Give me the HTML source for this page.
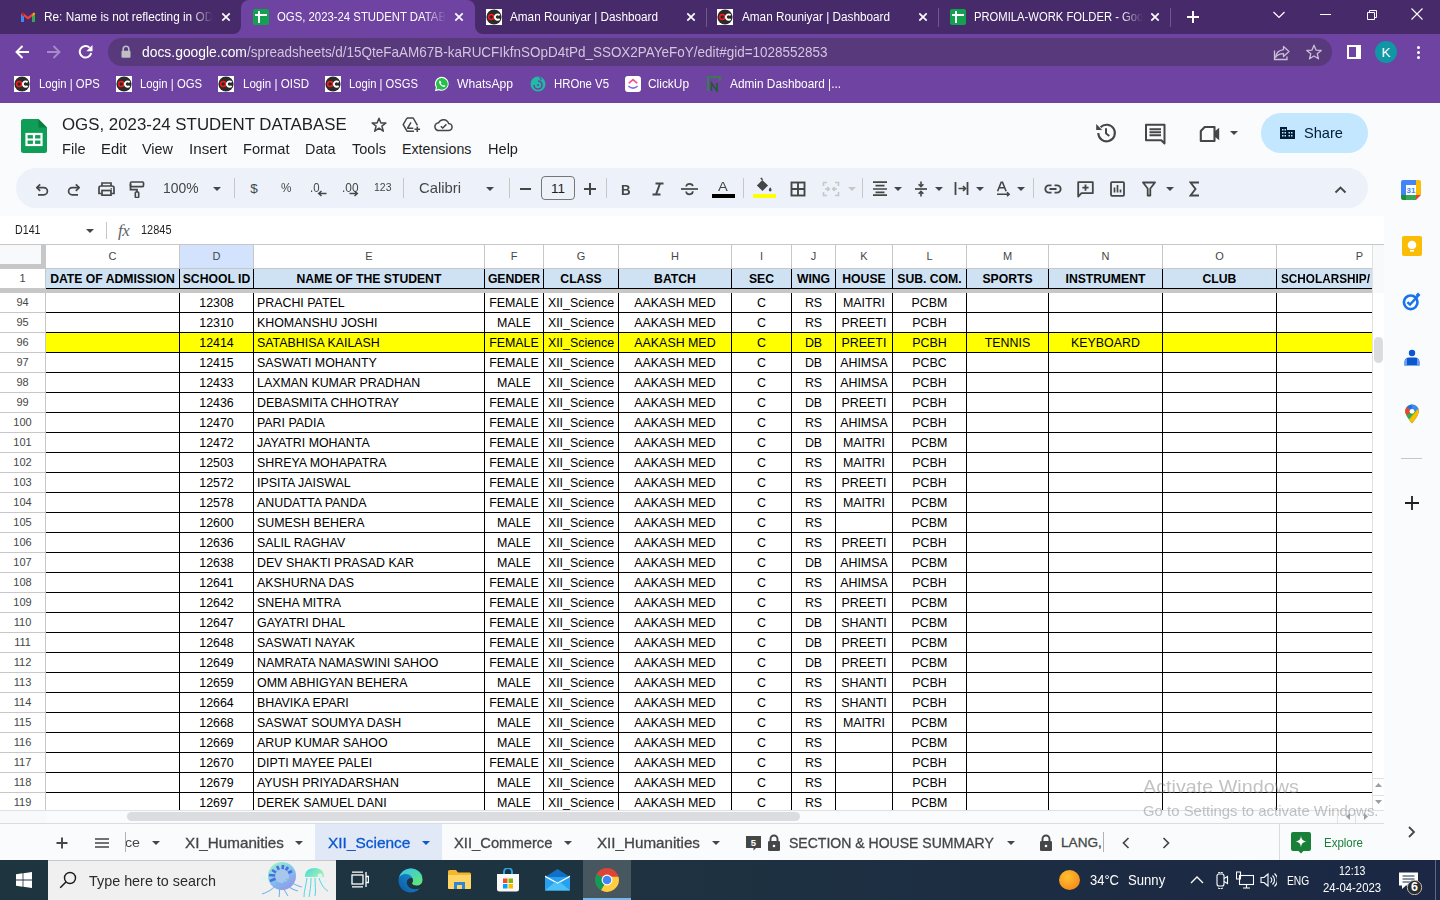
<!DOCTYPE html>
<html><head><meta charset="utf-8"><style>
*{margin:0;padding:0;box-sizing:border-box}
html,body{width:1440px;height:900px;overflow:hidden}
body{position:relative;font-family:"Liberation Sans",sans-serif;background:#f9fbfd}
.a{position:absolute}
.t{position:absolute;white-space:pre}
</style></head><body>
<div class="a" style="left:0px;top:0px;width:1440px;height:34px;background:#472a6a"></div>
<div class="a" style="left:0px;top:34px;width:1440px;height:69px;background:#6f43a1"></div>
<div class="a" style="left:241px;top:0px;width:234px;height:34px;background:#6f43a1;border-radius:8px 8px 0 0"></div>
<div class="a" style="left:233px;top:26px;width:8px;height:8px;background:#6f43a1"><div style="width:8px;height:8px;background:#472a6a;border-bottom-right-radius:8px"></div></div>
<div class="a" style="left:475px;top:26px;width:8px;height:8px;background:#6f43a1"><div style="width:8px;height:8px;background:#472a6a;border-bottom-left-radius:8px"></div></div>
<svg class="a" style="left:21px;top:12px;" width="14" height="10" viewBox="0 0 14 10"><path d="M0 2V10H3V4.5L7 7.5L11 4.5V10H14V2L12.5 0.6L7 4.8L1.5 0.6Z" fill="#ea4335"/><path d="M0 2V10H3V4.5Z" fill="#4285f4"/><path d="M11 4.5V10H14V2Z" fill="#34a853"/><path d="M11 4.5L14 2V1.2L12.5 0.6Z" fill="#fbbc04"/><path d="M0 2L3 4.5V1.5L1.5 0.6Z" fill="#c5221f"/></svg>
<div class="a" style="left:44px;top:7.59px;width:169px;height:18.3px;overflow:hidden;-webkit-mask-image:linear-gradient(90deg,#000 147px,transparent 169px)"><div class="t" style="left:0;top:3px;font-size:12.3px;line-height:12.3px;color:#fff;transform:scaleX(0.9593);transform-origin:0 0;">Re: Name is not reflecting in ODOO</div></div>
<svg class="a" style="left:218px;top:9px;" width="16" height="16" viewBox="0 0 16 16"><path d="M4.3 4.3L11.7 11.7M11.7 4.3L4.3 11.7" stroke="#fff" stroke-width="1.7" stroke-linecap="butt"/></svg>
<svg class="a" style="left:253px;top:9px;" width="16" height="16" viewBox="0 0 16 16"><rect width="16" height="16" rx="2" fill="#14a051"/><rect x="2" y="5" width="12" height="2" fill="#fff"/><rect x="5" y="2" width="2" height="12" fill="#fff"/></svg>
<div class="a" style="left:277px;top:7.59px;width:169px;height:18.3px;overflow:hidden;-webkit-mask-image:linear-gradient(90deg,#000 147px,transparent 169px)"><div class="t" style="left:0;top:3px;font-size:12.3px;line-height:12.3px;color:#fff;transform:scaleX(0.9228);transform-origin:0 0;">OGS, 2023-24 STUDENT DATABASE</div></div>
<svg class="a" style="left:451px;top:9px;" width="16" height="16" viewBox="0 0 16 16"><path d="M4.3 4.3L11.7 11.7M11.7 4.3L4.3 11.7" stroke="#fff" stroke-width="1.7" stroke-linecap="butt"/></svg>
<svg class="a" style="left:486px;top:9px;" width="16" height="16" viewBox="0 0 16 16"><rect width="16" height="16" fill="#fff"/><circle cx="8" cy="8" r="7.6" fill="#2b2b2b"/><circle cx="5.2" cy="8" r="2.5" fill="none" stroke="#ff1a1a" stroke-width="1.4"/><path d="M13.6 6.3A2.7 2.7 0 1 0 13.6 9.9" fill="none" stroke="#fff" stroke-width="1.9"/></svg>
<div class="t" style="left:510.00px;top:10.59px;font-size:12.3px;line-height:12.3px;color:#fff;transform:scaleX(0.9550);transform-origin:0 0;">Aman Rouniyar | Dashboard</div>
<svg class="a" style="left:683px;top:9px;" width="16" height="16" viewBox="0 0 16 16"><path d="M4.3 4.3L11.7 11.7M11.7 4.3L4.3 11.7" stroke="#fff" stroke-width="1.7" stroke-linecap="butt"/></svg>
<div class="a" style="left:706px;top:8px;width:1px;height:19px;background:#6e5a8a"></div>
<svg class="a" style="left:717px;top:9px;" width="16" height="16" viewBox="0 0 16 16"><rect width="16" height="16" fill="#fff"/><circle cx="8" cy="8" r="7.6" fill="#2b2b2b"/><circle cx="5.2" cy="8" r="2.5" fill="none" stroke="#ff1a1a" stroke-width="1.4"/><path d="M13.6 6.3A2.7 2.7 0 1 0 13.6 9.9" fill="none" stroke="#fff" stroke-width="1.9"/></svg>
<div class="t" style="left:742.00px;top:10.59px;font-size:12.3px;line-height:12.3px;color:#fff;transform:scaleX(0.9550);transform-origin:0 0;">Aman Rouniyar | Dashboard</div>
<svg class="a" style="left:915px;top:9px;" width="16" height="16" viewBox="0 0 16 16"><path d="M4.3 4.3L11.7 11.7M11.7 4.3L4.3 11.7" stroke="#fff" stroke-width="1.7" stroke-linecap="butt"/></svg>
<div class="a" style="left:938px;top:8px;width:1px;height:19px;background:#6e5a8a"></div>
<svg class="a" style="left:950px;top:9px;" width="16" height="16" viewBox="0 0 16 16"><rect width="16" height="16" rx="2" fill="#14a051"/><rect x="2" y="5" width="12" height="2" fill="#fff"/><rect x="5" y="2" width="2" height="12" fill="#fff"/></svg>
<div class="a" style="left:974px;top:7.59px;width:169px;height:18.3px;overflow:hidden;-webkit-mask-image:linear-gradient(90deg,#000 147px,transparent 169px)"><div class="t" style="left:0;top:3px;font-size:12.3px;line-height:12.3px;color:#fff;transform:scaleX(0.9146);transform-origin:0 0;">PROMILA-WORK FOLDER - Google Drive</div></div>
<svg class="a" style="left:1147px;top:9px;" width="16" height="16" viewBox="0 0 16 16"><path d="M4.3 4.3L11.7 11.7M11.7 4.3L4.3 11.7" stroke="#fff" stroke-width="1.7" stroke-linecap="butt"/></svg>
<div class="a" style="left:1170px;top:8px;width:1px;height:19px;background:#6e5a8a"></div>
<svg class="a" style="left:1185px;top:9px;" width="16" height="16" viewBox="0 0 16 16"><path d="M8 2V14M2 8H14" stroke="#fff" stroke-width="2"/></svg>
<svg class="a" style="left:1272px;top:9px;" width="14" height="10" viewBox="0 0 14 10"><path d="M1.5 3L7 8.5L12.5 3" fill="none" stroke="#fff" stroke-width="1.2"/></svg>
<div class="a" style="left:1320px;top:14px;width:11px;height:1px;background:#fff"></div>
<svg class="a" style="left:1364px;top:8px;" width="14" height="14" viewBox="0 0 14 14"><path d="M3.5 4.5H10.5V11.5H3.5Z M5.5 4.5V2.5H12.5V9.5H10.5" fill="none" stroke="#fff" stroke-width="1"/></svg>
<svg class="a" style="left:1410px;top:7px;" width="14" height="14" viewBox="0 0 14 14"><path d="M1.5 1.5L12.5 12.5M12.5 1.5L1.5 12.5" stroke="#fff" stroke-width="1.1"/></svg>
<svg class="a" style="left:14px;top:44px;" width="16" height="16" viewBox="0 0 16 16"><path d="M15 8H2.5M8.5 2L2.5 8L8.5 14" fill="none" stroke="#fff" stroke-width="1.9"/></svg>
<svg class="a" style="left:46px;top:44px;" width="16" height="16" viewBox="0 0 16 16"><path d="M1 8H13.5M7.5 2L13.5 8L7.5 14" fill="none" stroke="#a78ac9" stroke-width="1.9"/></svg>
<svg class="a" style="left:78px;top:44px;" width="16" height="16" viewBox="0 0 16 16"><path d="M13.2 9A5.8 5.8 0 1 1 11.6 3.6" fill="none" stroke="#fff" stroke-width="2"/><path d="M14.5 1V7.2H8.3Z" fill="#fff"/></svg>
<div class="a" style="left:108px;top:38px;width:1224px;height:28px;background:#57397c;border-radius:14px"></div>
<svg class="a" style="left:121px;top:45px;" width="10" height="13" viewBox="0 0 10 13"><path d="M2.2 6V4A2.8 2.8 0 0 1 7.8 4V6" fill="none" stroke="#bdbfc3" stroke-width="1.6"/><rect x="0.5" y="5.8" width="9" height="7" rx="1" fill="#bdbfc3"/></svg>
<div class="t" style="left:142.00px;top:44.98px;font-size:14.2px;line-height:14.2px;color:#fff;transform:scaleX(0.9781);transform-origin:0 0;">docs.google.com</div>
<div class="t" style="left:247.00px;top:44.98px;font-size:14.2px;line-height:14.2px;color:#d2c6e0;transform:scaleX(0.9495);transform-origin:0 0;">/spreadsheets/d/15QteFaAM67B-kaRUCFIkfnSOpD4tPd_SSOX2PAYeFoY/edit#gid=1028552853</div>
<svg class="a" style="left:1273px;top:44px;" width="18" height="17" viewBox="0 0 18 17"><path d="M10.5 2.5L16 7.5L10.5 12.5V9.6C6.5 9.6 4.2 10.8 2.5 13.5C3 9 5.5 6.2 10.5 5.6Z" fill="none" stroke="#c9bfd6" stroke-width="1.3" stroke-linejoin="round"/><path d="M1.5 6.5V15.5H14V12.5" fill="none" stroke="#c9bfd6" stroke-width="1.3"/></svg>
<svg class="a" style="left:1306px;top:44px;" width="16" height="16" viewBox="0 0 16 16"><path d="M8 1.2L10 6.1L15.2 6.4L11.2 9.7L12.5 14.8L8 12L3.5 14.8L4.8 9.7L0.8 6.4L6 6.1Z" fill="none" stroke="#c9bfd6" stroke-width="1.3" stroke-linejoin="round"/></svg>
<svg class="a" style="left:1347px;top:45px;" width="14" height="14" viewBox="0 0 14 14"><rect x="1" y="1" width="12" height="12" fill="none" stroke="#fff" stroke-width="2"/><rect x="9" y="0" width="5" height="14" fill="#fff"/></svg>
<div class="a" style="left:1375px;top:41px;width:22px;height:22px;border-radius:50%;background:#1096a4"></div>
<div class="t" style="left:1381.50px;top:45.57px;font-size:13.5px;line-height:13.5px;color:#fff;">K</div>
<div class="a" style="left:1416.5px;top:45.5px;width:3px;height:3px;border-radius:50%;background:#fff"></div>
<div class="a" style="left:1416.5px;top:50.5px;width:3px;height:3px;border-radius:50%;background:#fff"></div>
<div class="a" style="left:1416.5px;top:55.5px;width:3px;height:3px;border-radius:50%;background:#fff"></div>
<svg class="a" style="left:14px;top:76px;" width="16" height="16" viewBox="0 0 16 16"><rect width="16" height="16" fill="#fff"/><circle cx="8" cy="8" r="7.6" fill="#2b2b2b"/><circle cx="5.2" cy="8" r="2.5" fill="none" stroke="#ff1a1a" stroke-width="1.4"/><path d="M13.6 6.3A2.7 2.7 0 1 0 13.6 9.9" fill="none" stroke="#fff" stroke-width="1.9"/></svg>
<div class="t" style="left:38.60px;top:77.84px;font-size:12px;line-height:12px;color:#fff;transform:scaleX(0.9412);transform-origin:0 0;">Login | OPS</div>
<svg class="a" style="left:116px;top:76px;" width="16" height="16" viewBox="0 0 16 16"><rect width="16" height="16" fill="#fff"/><circle cx="8" cy="8" r="7.6" fill="#2b2b2b"/><circle cx="5.2" cy="8" r="2.5" fill="none" stroke="#ff1a1a" stroke-width="1.4"/><path d="M13.6 6.3A2.7 2.7 0 1 0 13.6 9.9" fill="none" stroke="#fff" stroke-width="1.9"/></svg>
<div class="t" style="left:140.00px;top:77.84px;font-size:12px;line-height:12px;color:#fff;transform:scaleX(0.9420);transform-origin:0 0;">Login | OGS</div>
<svg class="a" style="left:218px;top:76px;" width="16" height="16" viewBox="0 0 16 16"><rect width="16" height="16" fill="#fff"/><circle cx="8" cy="8" r="7.6" fill="#2b2b2b"/><circle cx="5.2" cy="8" r="2.5" fill="none" stroke="#ff1a1a" stroke-width="1.4"/><path d="M13.6 6.3A2.7 2.7 0 1 0 13.6 9.9" fill="none" stroke="#fff" stroke-width="1.9"/></svg>
<div class="t" style="left:243.00px;top:77.84px;font-size:12px;line-height:12px;color:#fff;transform:scaleX(0.9637);transform-origin:0 0;">Login | OISD</div>
<svg class="a" style="left:325px;top:76px;" width="16" height="16" viewBox="0 0 16 16"><rect width="16" height="16" fill="#fff"/><circle cx="8" cy="8" r="7.6" fill="#2b2b2b"/><circle cx="5.2" cy="8" r="2.5" fill="none" stroke="#ff1a1a" stroke-width="1.4"/><path d="M13.6 6.3A2.7 2.7 0 1 0 13.6 9.9" fill="none" stroke="#fff" stroke-width="1.9"/></svg>
<div class="t" style="left:349.00px;top:77.84px;font-size:12px;line-height:12px;color:#fff;transform:scaleX(0.9347);transform-origin:0 0;">Login | OSGS</div>
<svg class="a" style="left:434px;top:76px;" width="16" height="16" viewBox="0 0 16 16"><path d="M8 0.8A7 7 0 0 0 1.9 11.4L0.9 15.2L4.8 14.2A7 7 0 1 0 8 0.8Z" fill="#fff"/><path d="M8 2A5.9 5.9 0 0 0 3 11.1L2.4 13.6L4.9 13A5.9 5.9 0 1 0 8 2Z" fill="#25c04a"/><path d="M5.6 4.6C5.2 5 4.7 5.8 5.3 7.2C6 8.8 7.4 10.3 9.2 10.9C10.4 11.3 11 10.8 11.3 10.2L11.1 9.5L9.7 8.9L9 9.6C8.3 9.3 7.2 8.3 6.8 7.4L7.4 6.7L6.8 5.2Z" fill="#fff"/></svg>
<div class="t" style="left:457.00px;top:77.84px;font-size:12px;line-height:12px;color:#fff;transform:scaleX(1.0116);transform-origin:0 0;">WhatsApp</div>
<svg class="a" style="left:530px;top:76px;" width="16" height="16" viewBox="0 0 16 16"><circle cx="8" cy="8" r="7.5" fill="#1fbba6"/><path d="M4 9A4 4 0 0 0 12 9A4 4 0 0 0 8 5" fill="none" stroke="#6f43a1" stroke-width="1.6"/><circle cx="8" cy="9" r="1" fill="#6f43a1"/><path d="M9.5 1L11.5 4" stroke="#6f43a1" stroke-width="1.2"/></svg>
<div class="t" style="left:554.00px;top:77.84px;font-size:12px;line-height:12px;color:#fff;transform:scaleX(0.9478);transform-origin:0 0;">HROne V5</div>
<svg class="a" style="left:625px;top:76px;" width="16" height="16" viewBox="0 0 16 16"><rect width="16" height="16" rx="3" fill="#fff"/><path d="M4.2 6.8L8 3.6L11.8 6.8" fill="none" stroke="#ff4f8b" stroke-width="1.7" stroke-linecap="round"/><path d="M4 10.5C6.2 12.6 9.8 12.6 12 10.5" fill="none" stroke="#7b68ee" stroke-width="1.7" stroke-linecap="round"/></svg>
<div class="t" style="left:648.00px;top:77.84px;font-size:12px;line-height:12px;color:#fff;transform:scaleX(0.9918);transform-origin:0 0;">ClickUp</div>
<svg class="a" style="left:707px;top:76px;" width="14" height="16" viewBox="0 0 14 16"><path d="M1 15V1H13V5" fill="none" stroke="#2e8b3e" stroke-width="1.6"/><path d="M4.5 15V7L10 15V7" fill="none" stroke="#1e5e2a" stroke-width="1.6"/></svg>
<div class="t" style="left:730.00px;top:77.84px;font-size:12px;line-height:12px;color:#fff;transform:scaleX(0.9866);transform-origin:0 0;">Admin Dashboard |...</div>
<div class="a" style="left:0px;top:103px;width:1440px;height:757px;background:#f9fbfd"></div>
<div class="a" style="left:16px;top:168px;width:1352px;height:40px;background:#edf2fa;border-radius:20px"></div>
<div class="a" style="left:0px;top:216px;width:1384px;height:28px;background:#fff"></div>
<svg class="a" style="left:21px;top:119px;" width="26" height="34" viewBox="0 0 26 34"><path d="M0 2.5A2.5 2.5 0 0 1 2.5 0H17.5L26 8.5V31.5A2.5 2.5 0 0 1 23.5 34H2.5A2.5 2.5 0 0 1 0 31.5Z" fill="#0f9d58"/><path d="M17.5 0V8.5H26Z" fill="#087f3f"/><rect x="5.5" y="15" width="15" height="11" fill="none" stroke="#fff" stroke-width="2.2"/><path d="M5.5 20.5H20.5M13 15V26" stroke="#fff" stroke-width="2.2"/></svg>
<div class="t" style="left:61.50px;top:115.94px;font-size:17.2px;line-height:17.2px;color:#1f1f1f;transform:scaleX(0.9807);transform-origin:0 0;">OGS, 2023-24 STUDENT DATABASE</div>
<svg class="a" style="left:371px;top:117px;" width="16" height="16" viewBox="0 0 16 16"><path d="M8 1.3L9.9 6H14.9L10.9 9.1L12.3 14.2L8 11.2L3.7 14.2L5.1 9.1L1.1 6H6.1Z" fill="none" stroke="#444746" stroke-width="1.5" stroke-linejoin="round"/></svg>
<svg class="a" style="left:402px;top:117px;" width="19" height="16" viewBox="0 0 19 16"><path d="M5 1H11.2L15.4 8.3M12 14.2H5L1.2 7.6L5 1" fill="none" stroke="#444746" stroke-width="1.5" stroke-linejoin="round"/><path d="M9 5.4L5.6 11.2H11.3" fill="none" stroke="#444746" stroke-width="1.5" stroke-linejoin="round"/><path d="M15.3 9.4V15M12.5 12.2H18.1" stroke="#444746" stroke-width="1.6"/></svg>
<svg class="a" style="left:434px;top:118px;" width="19" height="14" viewBox="0 0 19 14"><path d="M5 12.6H14.3A3.6 3.6 0 0 0 14.6 5.4A5.4 5.4 0 0 0 4.6 4.8A3.9 3.9 0 0 0 5 12.6Z" fill="none" stroke="#444746" stroke-width="1.5"/><path d="M6.8 8.2L8.7 10L12.4 6.4" fill="none" stroke="#444746" stroke-width="1.5"/></svg>
<div class="t" style="left:62.30px;top:141.78px;font-size:14.2px;line-height:14.2px;color:#1f1f1f;transform:scaleX(1.0314);transform-origin:0 0;">File</div>
<div class="t" style="left:101.00px;top:141.78px;font-size:14.2px;line-height:14.2px;color:#1f1f1f;transform:scaleX(1.0462);transform-origin:0 0;">Edit</div>
<div class="t" style="left:141.50px;top:141.78px;font-size:14.2px;line-height:14.2px;color:#1f1f1f;transform:scaleX(1.0156);transform-origin:0 0;">View</div>
<div class="t" style="left:188.50px;top:141.78px;font-size:14.2px;line-height:14.2px;color:#1f1f1f;transform:scaleX(1.0700);transform-origin:0 0;">Insert</div>
<div class="t" style="left:242.50px;top:141.78px;font-size:14.2px;line-height:14.2px;color:#1f1f1f;transform:scaleX(1.0340);transform-origin:0 0;">Format</div>
<div class="t" style="left:304.50px;top:141.78px;font-size:14.2px;line-height:14.2px;color:#1f1f1f;transform:scaleX(1.0168);transform-origin:0 0;">Data</div>
<div class="t" style="left:351.50px;top:141.78px;font-size:14.2px;line-height:14.2px;color:#1f1f1f;transform:scaleX(1.0256);transform-origin:0 0;">Tools</div>
<div class="t" style="left:402.00px;top:141.78px;font-size:14.2px;line-height:14.2px;color:#1f1f1f;">Extensions</div>
<div class="t" style="left:487.50px;top:141.78px;font-size:14.2px;line-height:14.2px;color:#1f1f1f;transform:scaleX(1.0272);transform-origin:0 0;">Help</div>
<svg class="a" style="left:1094px;top:121px;" width="24" height="24" viewBox="0 0 24 24"><path d="M4.3 12A8.3 8.3 0 1 0 6.6 6.3" fill="none" stroke="#444746" stroke-width="2.1"/><path d="M2.2 2.9V8.9H8.2Z" fill="#444746"/><path d="M12 7.3V12.4L15.3 15.1" fill="none" stroke="#444746" stroke-width="2"/></svg>
<svg class="a" style="left:1144px;top:123px;" width="22" height="22" viewBox="0 0 22 22"><path d="M2 1.8H20.5V16.8V20.5L17.3 17.3H2Z" fill="none" stroke="#444746" stroke-width="2" stroke-linejoin="round"/><path d="M5.5 6.3H17M5.5 9.3H17M5.5 12.3H17" stroke="#444746" stroke-width="1.9"/></svg>
<svg class="a" style="left:1198px;top:124px;" width="24" height="20" viewBox="0 0 24 20"><path d="M2.8 7L6.7 3H16.5V17H2.8Z" fill="none" stroke="#444746" stroke-width="2.1" stroke-linejoin="round"/><path d="M16.5 7.6L21.2 3.8V16.2L16.5 12.4Z" fill="#444746"/></svg>
<svg class="a" style="left:1229px;top:130px;" width="10" height="6" viewBox="0 0 10 6"><path d="M1 1H9L5 5Z" fill="#444746"/></svg>
<div class="a" style="left:1261px;top:113px;width:107px;height:40px;background:#c2e7ff;border-radius:20px"></div>
<svg class="a" style="left:1279px;top:126px;" width="17" height="14" viewBox="0 0 17 14"><path d="M1 13V1H8V4H16V13Z" fill="#001d35"/><path d="M3 3H4.5V4.5H3ZM5.5 3H7V4.5H5.5ZM3 6H4.5V7.5H3ZM5.5 6H7V7.5H5.5ZM3 9H4.5V10.5H3ZM5.5 9H7V10.5H5.5ZM9.5 6H11V7.5H9.5ZM12 6H13.5V7.5H12ZM9.5 9H11V10.5H9.5ZM12 9H13.5V10.5H12Z" fill="#c2e7ff"/></svg>
<div class="t" style="left:1303.50px;top:125.97px;font-size:14.8px;line-height:14.8px;color:#001d35;transform:scaleX(0.9875);transform-origin:0 0;">Share</div>
<div class="a" style="left:1388px;top:117px;width:32px;height:32px;border-radius:50%;background:#0c8f9f"></div>
<div class="t" style="left:1398.33px;top:125.61px;font-size:17px;line-height:17px;color:#fff;">K</div>
<svg class="a" style="left:35px;top:183px;" width="14" height="13" viewBox="0 0 14 13"><path d="M5.2 1.3L1.8 4.6L5.2 7.9" fill="none" stroke="#444746" stroke-width="1.7" stroke-linejoin="round"/><path d="M2.3 4.6H8.8A3.6 3.6 0 0 1 8.8 11.8H3" fill="none" stroke="#444746" stroke-width="1.7"/></svg>
<svg class="a" style="left:67px;top:183px;" width="14" height="13" viewBox="0 0 14 13"><path d="M8.8 1.3L12.2 4.6L8.8 7.9" fill="none" stroke="#444746" stroke-width="1.7" stroke-linejoin="round"/><path d="M11.7 4.6H5.2A3.6 3.6 0 0 0 5.2 11.8H11" fill="none" stroke="#444746" stroke-width="1.7"/></svg>
<svg class="a" style="left:98px;top:182px;" width="17" height="14" viewBox="0 0 17 14"><path d="M4 4V1H13V4" fill="none" stroke="#444746" stroke-width="1.7"/><path d="M3.8 11.5H1V6A2 2 0 0 1 3 4H14A2 2 0 0 1 16 6V11.5H13.2" fill="none" stroke="#444746" stroke-width="1.7"/><rect x="4" y="8.5" width="9" height="4.7" fill="none" stroke="#444746" stroke-width="1.7"/><circle cx="13.3" cy="6.7" r="0.8" fill="#444746"/></svg>
<svg class="a" style="left:129px;top:181px;" width="16" height="17" viewBox="0 0 16 17"><rect x="1.5" y="1" width="13" height="4.6" rx="1" fill="none" stroke="#444746" stroke-width="1.7"/><path d="M1.5 3.3V8.7H8V11" fill="none" stroke="#444746" stroke-width="1.7"/><rect x="6.3" y="11" width="3.4" height="5.5" rx="0.8" fill="none" stroke="#444746" stroke-width="1.6"/></svg>
<div class="t" style="left:163.40px;top:182.32px;font-size:13.8px;line-height:13.8px;color:#444746;transform:scaleX(1.0058);transform-origin:0 0;">100%</div>
<svg class="a" style="left:213px;top:187px;" width="8" height="4" viewBox="0 0 8 4"><path d="M0 0H8L4 4Z" fill="#444746"/></svg>
<div class="a" style="left:234px;top:178px;width:1px;height:20px;background:#c7c7c7"></div>
<div class="t" style="left:250.25px;top:181.57px;font-size:13.5px;line-height:13.5px;color:#444746;">$</div>
<div class="t" style="left:280.80px;top:181.72px;font-size:12.5px;line-height:12.5px;color:#444746;transform:scaleX(0.9357);transform-origin:0 0;">%</div>
<div class="t" style="left:309.50px;top:181.72px;font-size:12.5px;line-height:12.5px;color:#444746;transform:scaleX(0.9113);transform-origin:0 0;">.0</div>
<svg class="a" style="left:317px;top:190px;" width="10" height="7" viewBox="0 0 10 7"><path d="M9.5 3.5H2M4.5 1L1.7 3.5L4.5 6" fill="none" stroke="#444746" stroke-width="1.5"/></svg>
<div class="t" style="left:341.50px;top:181.72px;font-size:12.5px;line-height:12.5px;color:#444746;transform:scaleX(0.9495);transform-origin:0 0;">.00</div>
<svg class="a" style="left:349px;top:190px;" width="10" height="7" viewBox="0 0 10 7"><path d="M0.5 3.5H8M5.5 1L8.3 3.5L5.5 6" fill="none" stroke="#444746" stroke-width="1.5"/></svg>
<div class="t" style="left:374.30px;top:182.01px;font-size:11.8px;line-height:11.8px;color:#444746;transform:scaleX(0.8888);transform-origin:0 0;">123</div>
<div class="a" style="left:403px;top:178px;width:1px;height:20px;background:#c7c7c7"></div>
<div class="t" style="left:419.00px;top:181.23px;font-size:14.5px;line-height:14.5px;color:#444746;transform:scaleX(1.0220);transform-origin:0 0;">Calibri</div>
<svg class="a" style="left:486px;top:187px;" width="8" height="4" viewBox="0 0 8 4"><path d="M0 0H8L4 4Z" fill="#444746"/></svg>
<div class="a" style="left:509px;top:178px;width:1px;height:20px;background:#c7c7c7"></div>
<div class="a" style="left:520px;top:188px;width:11px;height:2px;background:#444746"></div>
<div class="a" style="left:541px;top:176px;width:34px;height:24px;border:1px solid #747775;border-radius:4px"></div>
<div class="t" style="left:550.99px;top:182.07px;font-size:13.5px;line-height:13.5px;color:#1f1f1f;">11</div>
<svg class="a" style="left:583px;top:182px;" width="14" height="14" viewBox="0 0 14 14"><path d="M7 1V13M1 7H13" stroke="#444746" stroke-width="2"/></svg>
<div class="a" style="left:606px;top:178px;width:1px;height:20px;background:#c7c7c7"></div>
<div class="t" style="left:621.00px;top:181.60px;font-size:15px;line-height:15px;color:#444746;font-weight:bold;transform:scaleX(0.8862);transform-origin:0 0;">B</div>
<svg class="a" style="left:651px;top:182px;" width="14" height="14" viewBox="0 0 14 14"><path d="M4.5 1.5H12.5M1.5 12.5H9.5M9 1.5L5 12.5" fill="none" stroke="#444746" stroke-width="2"/></svg>
<svg class="a" style="left:680px;top:182px;" width="19" height="14" viewBox="0 0 19 14"><path d="M1 7H18" stroke="#444746" stroke-width="1.7"/><path d="M6.2 4.6C6.2 2.6 8 1.8 9.5 1.8C11 1.8 12.6 2.6 12.8 4.2M12.8 9.3C12.8 11.5 11 12.3 9.5 12.3C7.8 12.3 6.2 11.5 6.2 9.5" fill="none" stroke="#444746" stroke-width="1.7"/></svg>
<div class="t" style="left:718.00px;top:180.79px;font-size:12.3px;line-height:12.3px;color:#444746;transform:scaleX(1.1945);transform-origin:0 0;">A</div>
<div class="a" style="left:712px;top:194px;width:23px;height:4px;background:#000"></div>
<div class="a" style="left:743px;top:178px;width:1px;height:20px;background:#c7c7c7"></div>
<svg class="a" style="left:754px;top:177px;" width="19" height="15" viewBox="0 0 19 15"><path d="M6.8 1L8.6 2.8" stroke="#444746" stroke-width="1.6"/><path d="M8.3 2.9L14 8.6L8.5 14.1L2.9 8.5Z" fill="#444746"/><path d="M3.2 8.5H13.6" stroke="#444746" stroke-width="0.5"/><path d="M16.2 10.2C17 11.4 17.6 12.3 17.6 13A1.4 1.4 0 0 1 14.8 13C14.8 12.3 15.4 11.4 16.2 10.2Z" fill="#444746"/></svg>
<div class="a" style="left:753px;top:194px;width:23px;height:4px;background:#ffff00"></div>
<svg class="a" style="left:790px;top:181px;" width="16" height="16" viewBox="0 0 16 16"><rect x="1.5" y="1.5" width="13" height="13" fill="none" stroke="#444746" stroke-width="1.9"/><path d="M8 1.5V14.5M1.5 8H14.5" stroke="#444746" stroke-width="1.9"/></svg>
<svg class="a" style="left:822px;top:181px;" width="18" height="16" viewBox="0 0 18 16"><path d="M1.5 5V1.5H5M1.5 11V14.5H5M16.5 5V1.5H13M16.5 11V14.5H13" fill="none" stroke="#c4c7c5" stroke-width="1.6"/><path d="M3 8H7M5.3 6L7.3 8L5.3 10M15 8H11M12.7 6L10.7 8L12.7 10" fill="none" stroke="#c4c7c5" stroke-width="1.5"/></svg>
<svg class="a" style="left:848px;top:187px;" width="8" height="4" viewBox="0 0 8 4"><path d="M0 0H8L4 4Z" fill="#c4c7c5"/></svg>
<div class="a" style="left:862px;top:178px;width:1px;height:20px;background:#c7c7c7"></div>
<svg class="a" style="left:872px;top:181px;" width="16" height="15" viewBox="0 0 16 15"><path d="M1 1.2H15M3.5 4.6H12.5M1 8H15M3.5 11.3H12.5M1 14.2H15" stroke="#444746" stroke-width="1.7"/></svg>
<svg class="a" style="left:894px;top:187px;" width="8" height="4" viewBox="0 0 8 4"><path d="M0 0H8L4 4Z" fill="#444746"/></svg>
<svg class="a" style="left:914px;top:181px;" width="14" height="16" viewBox="0 0 14 16"><path d="M1 8H13" stroke="#444746" stroke-width="1.7"/><path d="M7 0.5V5.3M4.6 3.2L7 5.6L9.4 3.2M7 15.5V10.7M4.6 12.8L7 10.4L9.4 12.8" fill="none" stroke="#444746" stroke-width="1.6"/></svg>
<svg class="a" style="left:935px;top:187px;" width="8" height="4" viewBox="0 0 8 4"><path d="M0 0H8L4 4Z" fill="#444746"/></svg>
<svg class="a" style="left:954px;top:181px;" width="15" height="15" viewBox="0 0 15 15"><path d="M1.5 1V14M13.5 1V14" stroke="#444746" stroke-width="1.8"/><path d="M4.5 7.5H11.5M9 5L11.5 7.5L9 10" fill="none" stroke="#444746" stroke-width="1.7"/></svg>
<svg class="a" style="left:976px;top:187px;" width="8" height="4" viewBox="0 0 8 4"><path d="M0 0H8L4 4Z" fill="#444746"/></svg>
<svg class="a" style="left:996px;top:181px;" width="15" height="16" viewBox="0 0 15 16"><path d="M1.6 10.3L5.2 1.3H6.5L10.1 10.3M3 6.8H8.7" fill="none" stroke="#444746" stroke-width="1.6"/><path d="M1 13.3H13M11 11.3L13.2 13.3L11 15.3" fill="none" stroke="#444746" stroke-width="1.5"/></svg>
<svg class="a" style="left:1017px;top:187px;" width="8" height="4" viewBox="0 0 8 4"><path d="M0 0H8L4 4Z" fill="#444746"/></svg>
<div class="a" style="left:1033px;top:178px;width:1px;height:20px;background:#c7c7c7"></div>
<svg class="a" style="left:1044px;top:184px;" width="18" height="10" viewBox="0 0 18 10"><path d="M7.5 1.3H5A3.7 3.7 0 0 0 5 8.7H7.5M10.5 1.3H13A3.7 3.7 0 0 1 13 8.7H10.5M5.5 5H12.5" fill="none" stroke="#444746" stroke-width="1.8"/></svg>
<svg class="a" style="left:1077px;top:181px;" width="17" height="17" viewBox="0 0 17 17"><path d="M1.2 1.2H15.8V12.2H4.5L1.2 15.5Z" fill="none" stroke="#444746" stroke-width="1.8" stroke-linejoin="round"/><path d="M8.5 3.6V9.8M5.4 6.7H11.6" stroke="#444746" stroke-width="1.8"/></svg>
<svg class="a" style="left:1110px;top:181px;" width="15" height="16" viewBox="0 0 15 16"><rect x="1" y="1.2" width="13" height="13.6" rx="1" fill="none" stroke="#444746" stroke-width="1.8"/><path d="M4.5 11.5V6.5M7.5 11.5V4M10.5 11.5V8.5" stroke="#444746" stroke-width="1.7"/></svg>
<svg class="a" style="left:1142px;top:181px;" width="14" height="16" viewBox="0 0 14 16"><path d="M1 1.5H13L8.3 7.5V14.5H5.7V7.5Z" fill="none" stroke="#444746" stroke-width="1.8" stroke-linejoin="round"/></svg>
<svg class="a" style="left:1166px;top:187px;" width="8" height="4" viewBox="0 0 8 4"><path d="M0 0H8L4 4Z" fill="#444746"/></svg>
<svg class="a" style="left:1189px;top:181px;" width="11" height="16" viewBox="0 0 11 16"><path d="M10 1.5H1.5L6.5 8L1.5 14.5H10" fill="none" stroke="#444746" stroke-width="1.9"/></svg>
<svg class="a" style="left:1334px;top:186px;" width="13" height="8" viewBox="0 0 13 8"><path d="M1.5 6.5L6.5 1.5L11.5 6.5" fill="none" stroke="#444746" stroke-width="1.9"/></svg>
<div class="t" style="left:14.50px;top:224.16px;font-size:12.8px;line-height:12.8px;color:#1f1f1f;transform:scaleX(0.8333);transform-origin:0 0;">D141</div>
<svg class="a" style="left:86px;top:228.5px;" width="8" height="4" viewBox="0 0 8 4"><path d="M0 0H8L4 4Z" fill="#444746"/></svg>
<div class="a" style="left:106px;top:222px;width:1px;height:17px;background:#c7c7c7"></div>
<div class="t" style="left:118px;top:221.5px;font-family:'Liberation Serif',serif;font-style:italic;font-size:17px;line-height:17px;color:#5f6368;letter-spacing:-0.5px">fx</div>
<div class="t" style="left:141.30px;top:224.42px;font-size:12.5px;line-height:12.5px;color:#1f1f1f;transform:scaleX(0.8774);transform-origin:0 0;">12845</div>
<div class="a" style="left:0px;top:244px;width:1384px;height:567px;background:#fff"></div>
<div class="a" style="left:0px;top:245px;width:41px;height:19px;background:#f8f9fa"></div>
<div class="a" style="left:41px;top:245px;width:5px;height:24px;background:#c7c7c7"></div>
<div class="a" style="left:0px;top:264px;width:46px;height:5px;background:#c7c7c7"></div>
<div class="a" style="left:0px;top:244px;width:1384px;height:1px;background:#c7c7c7"></div>
<div class="a" style="left:46px;top:268px;width:1326px;height:1px;background:#c7c7c7"></div>
<div class="a" style="left:180px;top:245px;width:73px;height:23px;background:#d3e3fd"></div>
<div class="a" style="left:1373px;top:245px;width:11px;height:48px;background:#f8f9fa"></div>
<div class="t" style="left:108.53px;top:250.69px;font-size:11px;line-height:11px;color:#444746;">C</div>
<div class="t" style="left:212.53px;top:250.69px;font-size:11px;line-height:11px;color:#444746;">D</div>
<div class="t" style="left:365.33px;top:250.69px;font-size:11px;line-height:11px;color:#444746;">E</div>
<div class="t" style="left:510.64px;top:250.69px;font-size:11px;line-height:11px;color:#444746;">F</div>
<div class="t" style="left:576.72px;top:250.69px;font-size:11px;line-height:11px;color:#444746;">G</div>
<div class="t" style="left:671.03px;top:250.69px;font-size:11px;line-height:11px;color:#444746;">H</div>
<div class="t" style="left:759.97px;top:250.69px;font-size:11px;line-height:11px;color:#444746;">I</div>
<div class="t" style="left:810.75px;top:250.69px;font-size:11px;line-height:11px;color:#444746;">J</div>
<div class="t" style="left:860.33px;top:250.69px;font-size:11px;line-height:11px;color:#444746;">K</div>
<div class="t" style="left:926.44px;top:250.69px;font-size:11px;line-height:11px;color:#444746;">L</div>
<div class="t" style="left:1002.92px;top:250.69px;font-size:11px;line-height:11px;color:#444746;">M</div>
<div class="t" style="left:1101.53px;top:250.69px;font-size:11px;line-height:11px;color:#444746;">N</div>
<div class="t" style="left:1215.22px;top:250.69px;font-size:11px;line-height:11px;color:#444746;">O</div>
<div class="t" style="left:1355.63px;top:250.69px;font-size:11px;line-height:11px;color:#444746;">P</div>
<div class="a" style="left:179px;top:245px;width:1px;height:23px;background:#c7c7c7"></div>
<div class="a" style="left:253px;top:245px;width:1px;height:23px;background:#c7c7c7"></div>
<div class="a" style="left:484px;top:245px;width:1px;height:23px;background:#c7c7c7"></div>
<div class="a" style="left:543px;top:245px;width:1px;height:23px;background:#c7c7c7"></div>
<div class="a" style="left:618px;top:245px;width:1px;height:23px;background:#c7c7c7"></div>
<div class="a" style="left:731px;top:245px;width:1px;height:23px;background:#c7c7c7"></div>
<div class="a" style="left:791px;top:245px;width:1px;height:23px;background:#c7c7c7"></div>
<div class="a" style="left:835px;top:245px;width:1px;height:23px;background:#c7c7c7"></div>
<div class="a" style="left:892px;top:245px;width:1px;height:23px;background:#c7c7c7"></div>
<div class="a" style="left:966px;top:245px;width:1px;height:23px;background:#c7c7c7"></div>
<div class="a" style="left:1048px;top:245px;width:1px;height:23px;background:#c7c7c7"></div>
<div class="a" style="left:1162px;top:245px;width:1px;height:23px;background:#c7c7c7"></div>
<div class="a" style="left:1276px;top:245px;width:1px;height:23px;background:#c7c7c7"></div>
<div class="a" style="left:1372px;top:245px;width:1px;height:23px;background:#c7c7c7"></div>
<div class="a" style="left:1372px;top:245px;width:1px;height:566px;background:#e1e1e1"></div>
<div class="a" style="left:46px;top:269px;width:1326px;height:19px;background:#cfe2f3"></div>
<div class="a" style="left:46px;top:288px;width:1326px;height:1px;background:#000"></div>
<div class="a" style="left:0px;top:288px;width:46px;height:1px;background:#c7c7c7"></div>
<div class="a" style="left:0px;top:289px;width:1372px;height:4px;background:#c7c7c7"></div>
<div class="a" style="left:45px;top:269px;width:1px;height:542px;background:#c7c7c7"></div>
<div class="t" style="left:19.44px;top:272.69px;font-size:11px;line-height:11px;color:#444746;">1</div>
<div class="t" style="left:50.14px;top:272.67px;font-size:12.2px;line-height:12.2px;color:#000;font-weight:bold;">DATE OF ADMISSION</div>
<div class="t" style="left:182.72px;top:272.67px;font-size:12.2px;line-height:12.2px;color:#000;font-weight:bold;">SCHOOL ID</div>
<div class="t" style="left:296.48px;top:272.67px;font-size:12.2px;line-height:12.2px;color:#000;font-weight:bold;">NAME OF THE STUDENT</div>
<div class="t" style="left:487.90px;top:272.67px;font-size:12.2px;line-height:12.2px;color:#000;font-weight:bold;">GENDER</div>
<div class="t" style="left:560.33px;top:272.67px;font-size:12.2px;line-height:12.2px;color:#000;font-weight:bold;">CLASS</div>
<div class="t" style="left:654.11px;top:272.67px;font-size:12.2px;line-height:12.2px;color:#000;font-weight:bold;">BATCH</div>
<div class="t" style="left:748.96px;top:272.67px;font-size:12.2px;line-height:12.2px;color:#000;font-weight:bold;">SEC</div>
<div class="t" style="left:796.90px;top:272.67px;font-size:12.2px;line-height:12.2px;color:#000;font-weight:bold;">WING</div>
<div class="t" style="left:842.31px;top:272.67px;font-size:12.2px;line-height:12.2px;color:#000;font-weight:bold;">HOUSE</div>
<div class="t" style="left:897.30px;top:272.67px;font-size:12.2px;line-height:12.2px;color:#000;font-weight:bold;">SUB. COM.</div>
<div class="t" style="left:982.42px;top:272.67px;font-size:12.2px;line-height:12.2px;color:#000;font-weight:bold;">SPORTS</div>
<div class="t" style="left:1065.51px;top:272.67px;font-size:12.2px;line-height:12.2px;color:#000;font-weight:bold;">INSTRUMENT</div>
<div class="t" style="left:1202.56px;top:272.67px;font-size:12.2px;line-height:12.2px;color:#000;font-weight:bold;">CLUB</div>
<div class="t" style="left:1280.60px;top:272.67px;font-size:12.2px;line-height:12.2px;color:#000;font-weight:bold;transform:scaleX(0.9654);transform-origin:0 0;">SCHOLARSHIP/</div>
<div class="a" style="left:179px;top:269px;width:1px;height:19px;background:#000"></div>
<div class="a" style="left:253px;top:269px;width:1px;height:19px;background:#000"></div>
<div class="a" style="left:484px;top:269px;width:1px;height:19px;background:#000"></div>
<div class="a" style="left:543px;top:269px;width:1px;height:19px;background:#000"></div>
<div class="a" style="left:618px;top:269px;width:1px;height:19px;background:#000"></div>
<div class="a" style="left:731px;top:269px;width:1px;height:19px;background:#000"></div>
<div class="a" style="left:791px;top:269px;width:1px;height:19px;background:#000"></div>
<div class="a" style="left:835px;top:269px;width:1px;height:19px;background:#000"></div>
<div class="a" style="left:892px;top:269px;width:1px;height:19px;background:#000"></div>
<div class="a" style="left:966px;top:269px;width:1px;height:19px;background:#000"></div>
<div class="a" style="left:1048px;top:269px;width:1px;height:19px;background:#000"></div>
<div class="a" style="left:1162px;top:269px;width:1px;height:19px;background:#000"></div>
<div class="a" style="left:1276px;top:269px;width:1px;height:19px;background:#000"></div>
<div class="a" style="left:1373px;top:245px;width:11px;height:48px;background:#f8f9fa"></div>
<div class="a" style="left:1372px;top:245px;width:1px;height:48px;background:#e1e1e1"></div>
<div class="t" style="left:16.38px;top:296.69px;font-size:11px;line-height:11px;color:#444746;">94</div>
<div class="t" style="left:199.26px;top:296.50px;font-size:12.4px;line-height:12.4px;color:#000;">12308</div>
<div class="t" style="left:257.00px;top:296.50px;font-size:12.4px;line-height:12.4px;color:#000;">PRACHI PATEL</div>
<div class="t" style="left:489.19px;top:296.50px;font-size:12.4px;line-height:12.4px;color:#000;">FEMALE</div>
<div class="t" style="left:547.91px;top:296.50px;font-size:12.4px;line-height:12.4px;color:#000;">XII_Science</div>
<div class="t" style="left:634.34px;top:296.50px;font-size:12.4px;line-height:12.4px;color:#000;">AAKASH MED</div>
<div class="t" style="left:757.02px;top:296.50px;font-size:12.4px;line-height:12.4px;color:#000;">C</div>
<div class="t" style="left:804.89px;top:296.50px;font-size:12.4px;line-height:12.4px;color:#000;">RS</div>
<div class="t" style="left:842.99px;top:296.50px;font-size:12.4px;line-height:12.4px;color:#000;">MAITRI</div>
<div class="t" style="left:911.59px;top:296.50px;font-size:12.4px;line-height:12.4px;color:#000;">PCBM</div>
<div class="a" style="left:0px;top:312px;width:45px;height:1px;background:#c7c7c7"></div>
<div class="a" style="left:46px;top:312px;width:1326px;height:1px;background:#000"></div>
<div class="t" style="left:16.38px;top:316.69px;font-size:11px;line-height:11px;color:#444746;">95</div>
<div class="t" style="left:199.26px;top:316.50px;font-size:12.4px;line-height:12.4px;color:#000;">12310</div>
<div class="t" style="left:257.00px;top:316.50px;font-size:12.4px;line-height:12.4px;color:#000;">KHOMANSHU JOSHI</div>
<div class="t" style="left:497.12px;top:316.50px;font-size:12.4px;line-height:12.4px;color:#000;">MALE</div>
<div class="t" style="left:547.91px;top:316.50px;font-size:12.4px;line-height:12.4px;color:#000;">XII_Science</div>
<div class="t" style="left:634.34px;top:316.50px;font-size:12.4px;line-height:12.4px;color:#000;">AAKASH MED</div>
<div class="t" style="left:757.02px;top:316.50px;font-size:12.4px;line-height:12.4px;color:#000;">C</div>
<div class="t" style="left:804.89px;top:316.50px;font-size:12.4px;line-height:12.4px;color:#000;">RS</div>
<div class="t" style="left:841.61px;top:316.50px;font-size:12.4px;line-height:12.4px;color:#000;">PREETI</div>
<div class="t" style="left:912.27px;top:316.50px;font-size:12.4px;line-height:12.4px;color:#000;">PCBH</div>
<div class="a" style="left:0px;top:332px;width:45px;height:1px;background:#c7c7c7"></div>
<div class="a" style="left:46px;top:332px;width:1326px;height:1px;background:#000"></div>
<div class="a" style="left:46px;top:333px;width:1326px;height:19px;background:#ffff00"></div>
<div class="t" style="left:16.38px;top:336.69px;font-size:11px;line-height:11px;color:#444746;">96</div>
<div class="t" style="left:199.26px;top:336.50px;font-size:12.4px;line-height:12.4px;color:#000;">12414</div>
<div class="t" style="left:257.00px;top:336.50px;font-size:12.4px;line-height:12.4px;color:#000;">SATABHISA KAILASH</div>
<div class="t" style="left:489.19px;top:336.50px;font-size:12.4px;line-height:12.4px;color:#000;">FEMALE</div>
<div class="t" style="left:547.91px;top:336.50px;font-size:12.4px;line-height:12.4px;color:#000;">XII_Science</div>
<div class="t" style="left:634.34px;top:336.50px;font-size:12.4px;line-height:12.4px;color:#000;">AAKASH MED</div>
<div class="t" style="left:757.02px;top:336.50px;font-size:12.4px;line-height:12.4px;color:#000;">C</div>
<div class="t" style="left:804.89px;top:336.50px;font-size:12.4px;line-height:12.4px;color:#000;">DB</div>
<div class="t" style="left:841.61px;top:336.50px;font-size:12.4px;line-height:12.4px;color:#000;">PREETI</div>
<div class="t" style="left:912.27px;top:336.50px;font-size:12.4px;line-height:12.4px;color:#000;">PCBH</div>
<div class="t" style="left:984.76px;top:336.50px;font-size:12.4px;line-height:12.4px;color:#000;">TENNIS</div>
<div class="t" style="left:1071.04px;top:336.50px;font-size:12.4px;line-height:12.4px;color:#000;">KEYBOARD</div>
<div class="a" style="left:0px;top:352px;width:45px;height:1px;background:#c7c7c7"></div>
<div class="a" style="left:46px;top:352px;width:1326px;height:1px;background:#000"></div>
<div class="t" style="left:16.38px;top:356.69px;font-size:11px;line-height:11px;color:#444746;">97</div>
<div class="t" style="left:199.26px;top:356.50px;font-size:12.4px;line-height:12.4px;color:#000;">12415</div>
<div class="t" style="left:257.00px;top:356.50px;font-size:12.4px;line-height:12.4px;color:#000;">SASWATI MOHANTY</div>
<div class="t" style="left:489.19px;top:356.50px;font-size:12.4px;line-height:12.4px;color:#000;">FEMALE</div>
<div class="t" style="left:547.91px;top:356.50px;font-size:12.4px;line-height:12.4px;color:#000;">XII_Science</div>
<div class="t" style="left:634.34px;top:356.50px;font-size:12.4px;line-height:12.4px;color:#000;">AAKASH MED</div>
<div class="t" style="left:757.02px;top:356.50px;font-size:12.4px;line-height:12.4px;color:#000;">C</div>
<div class="t" style="left:804.89px;top:356.50px;font-size:12.4px;line-height:12.4px;color:#000;">DB</div>
<div class="t" style="left:840.23px;top:356.50px;font-size:12.4px;line-height:12.4px;color:#000;">AHIMSA</div>
<div class="t" style="left:912.27px;top:356.50px;font-size:12.4px;line-height:12.4px;color:#000;">PCBC</div>
<div class="a" style="left:0px;top:372px;width:45px;height:1px;background:#c7c7c7"></div>
<div class="a" style="left:46px;top:372px;width:1326px;height:1px;background:#000"></div>
<div class="t" style="left:16.38px;top:376.69px;font-size:11px;line-height:11px;color:#444746;">98</div>
<div class="t" style="left:199.26px;top:376.50px;font-size:12.4px;line-height:12.4px;color:#000;">12433</div>
<div class="t" style="left:257.00px;top:376.50px;font-size:12.4px;line-height:12.4px;color:#000;">LAXMAN KUMAR PRADHAN</div>
<div class="t" style="left:497.12px;top:376.50px;font-size:12.4px;line-height:12.4px;color:#000;">MALE</div>
<div class="t" style="left:547.91px;top:376.50px;font-size:12.4px;line-height:12.4px;color:#000;">XII_Science</div>
<div class="t" style="left:634.34px;top:376.50px;font-size:12.4px;line-height:12.4px;color:#000;">AAKASH MED</div>
<div class="t" style="left:757.02px;top:376.50px;font-size:12.4px;line-height:12.4px;color:#000;">C</div>
<div class="t" style="left:804.89px;top:376.50px;font-size:12.4px;line-height:12.4px;color:#000;">RS</div>
<div class="t" style="left:840.23px;top:376.50px;font-size:12.4px;line-height:12.4px;color:#000;">AHIMSA</div>
<div class="t" style="left:912.27px;top:376.50px;font-size:12.4px;line-height:12.4px;color:#000;">PCBH</div>
<div class="a" style="left:0px;top:392px;width:45px;height:1px;background:#c7c7c7"></div>
<div class="a" style="left:46px;top:392px;width:1326px;height:1px;background:#000"></div>
<div class="t" style="left:16.38px;top:396.69px;font-size:11px;line-height:11px;color:#444746;">99</div>
<div class="t" style="left:199.26px;top:396.50px;font-size:12.4px;line-height:12.4px;color:#000;">12436</div>
<div class="t" style="left:257.00px;top:396.50px;font-size:12.4px;line-height:12.4px;color:#000;">DEBASMITA CHHOTRAY</div>
<div class="t" style="left:489.19px;top:396.50px;font-size:12.4px;line-height:12.4px;color:#000;">FEMALE</div>
<div class="t" style="left:547.91px;top:396.50px;font-size:12.4px;line-height:12.4px;color:#000;">XII_Science</div>
<div class="t" style="left:634.34px;top:396.50px;font-size:12.4px;line-height:12.4px;color:#000;">AAKASH MED</div>
<div class="t" style="left:757.02px;top:396.50px;font-size:12.4px;line-height:12.4px;color:#000;">C</div>
<div class="t" style="left:804.89px;top:396.50px;font-size:12.4px;line-height:12.4px;color:#000;">DB</div>
<div class="t" style="left:841.61px;top:396.50px;font-size:12.4px;line-height:12.4px;color:#000;">PREETI</div>
<div class="t" style="left:912.27px;top:396.50px;font-size:12.4px;line-height:12.4px;color:#000;">PCBH</div>
<div class="a" style="left:0px;top:412px;width:45px;height:1px;background:#c7c7c7"></div>
<div class="a" style="left:46px;top:412px;width:1326px;height:1px;background:#000"></div>
<div class="t" style="left:13.32px;top:416.69px;font-size:11px;line-height:11px;color:#444746;">100</div>
<div class="t" style="left:199.26px;top:416.50px;font-size:12.4px;line-height:12.4px;color:#000;">12470</div>
<div class="t" style="left:257.00px;top:416.50px;font-size:12.4px;line-height:12.4px;color:#000;">PARI PADIA</div>
<div class="t" style="left:489.19px;top:416.50px;font-size:12.4px;line-height:12.4px;color:#000;">FEMALE</div>
<div class="t" style="left:547.91px;top:416.50px;font-size:12.4px;line-height:12.4px;color:#000;">XII_Science</div>
<div class="t" style="left:634.34px;top:416.50px;font-size:12.4px;line-height:12.4px;color:#000;">AAKASH MED</div>
<div class="t" style="left:757.02px;top:416.50px;font-size:12.4px;line-height:12.4px;color:#000;">C</div>
<div class="t" style="left:804.89px;top:416.50px;font-size:12.4px;line-height:12.4px;color:#000;">RS</div>
<div class="t" style="left:840.23px;top:416.50px;font-size:12.4px;line-height:12.4px;color:#000;">AHIMSA</div>
<div class="t" style="left:912.27px;top:416.50px;font-size:12.4px;line-height:12.4px;color:#000;">PCBH</div>
<div class="a" style="left:0px;top:432px;width:45px;height:1px;background:#c7c7c7"></div>
<div class="a" style="left:46px;top:432px;width:1326px;height:1px;background:#000"></div>
<div class="t" style="left:13.32px;top:436.69px;font-size:11px;line-height:11px;color:#444746;">101</div>
<div class="t" style="left:199.26px;top:436.50px;font-size:12.4px;line-height:12.4px;color:#000;">12472</div>
<div class="t" style="left:257.00px;top:436.50px;font-size:12.4px;line-height:12.4px;color:#000;">JAYATRI MOHANTA</div>
<div class="t" style="left:489.19px;top:436.50px;font-size:12.4px;line-height:12.4px;color:#000;">FEMALE</div>
<div class="t" style="left:547.91px;top:436.50px;font-size:12.4px;line-height:12.4px;color:#000;">XII_Science</div>
<div class="t" style="left:634.34px;top:436.50px;font-size:12.4px;line-height:12.4px;color:#000;">AAKASH MED</div>
<div class="t" style="left:757.02px;top:436.50px;font-size:12.4px;line-height:12.4px;color:#000;">C</div>
<div class="t" style="left:804.89px;top:436.50px;font-size:12.4px;line-height:12.4px;color:#000;">DB</div>
<div class="t" style="left:842.99px;top:436.50px;font-size:12.4px;line-height:12.4px;color:#000;">MAITRI</div>
<div class="t" style="left:911.59px;top:436.50px;font-size:12.4px;line-height:12.4px;color:#000;">PCBM</div>
<div class="a" style="left:0px;top:452px;width:45px;height:1px;background:#c7c7c7"></div>
<div class="a" style="left:46px;top:452px;width:1326px;height:1px;background:#000"></div>
<div class="t" style="left:13.32px;top:456.69px;font-size:11px;line-height:11px;color:#444746;">102</div>
<div class="t" style="left:199.26px;top:456.50px;font-size:12.4px;line-height:12.4px;color:#000;">12503</div>
<div class="t" style="left:257.00px;top:456.50px;font-size:12.4px;line-height:12.4px;color:#000;">SHREYA MOHAPATRA</div>
<div class="t" style="left:489.19px;top:456.50px;font-size:12.4px;line-height:12.4px;color:#000;">FEMALE</div>
<div class="t" style="left:547.91px;top:456.50px;font-size:12.4px;line-height:12.4px;color:#000;">XII_Science</div>
<div class="t" style="left:634.34px;top:456.50px;font-size:12.4px;line-height:12.4px;color:#000;">AAKASH MED</div>
<div class="t" style="left:757.02px;top:456.50px;font-size:12.4px;line-height:12.4px;color:#000;">C</div>
<div class="t" style="left:804.89px;top:456.50px;font-size:12.4px;line-height:12.4px;color:#000;">RS</div>
<div class="t" style="left:842.99px;top:456.50px;font-size:12.4px;line-height:12.4px;color:#000;">MAITRI</div>
<div class="t" style="left:912.27px;top:456.50px;font-size:12.4px;line-height:12.4px;color:#000;">PCBH</div>
<div class="a" style="left:0px;top:472px;width:45px;height:1px;background:#c7c7c7"></div>
<div class="a" style="left:46px;top:472px;width:1326px;height:1px;background:#000"></div>
<div class="t" style="left:13.32px;top:476.69px;font-size:11px;line-height:11px;color:#444746;">103</div>
<div class="t" style="left:199.26px;top:476.50px;font-size:12.4px;line-height:12.4px;color:#000;">12572</div>
<div class="t" style="left:257.00px;top:476.50px;font-size:12.4px;line-height:12.4px;color:#000;">IPSITA JAISWAL</div>
<div class="t" style="left:489.19px;top:476.50px;font-size:12.4px;line-height:12.4px;color:#000;">FEMALE</div>
<div class="t" style="left:547.91px;top:476.50px;font-size:12.4px;line-height:12.4px;color:#000;">XII_Science</div>
<div class="t" style="left:634.34px;top:476.50px;font-size:12.4px;line-height:12.4px;color:#000;">AAKASH MED</div>
<div class="t" style="left:757.02px;top:476.50px;font-size:12.4px;line-height:12.4px;color:#000;">C</div>
<div class="t" style="left:804.89px;top:476.50px;font-size:12.4px;line-height:12.4px;color:#000;">RS</div>
<div class="t" style="left:841.61px;top:476.50px;font-size:12.4px;line-height:12.4px;color:#000;">PREETI</div>
<div class="t" style="left:912.27px;top:476.50px;font-size:12.4px;line-height:12.4px;color:#000;">PCBH</div>
<div class="a" style="left:0px;top:492px;width:45px;height:1px;background:#c7c7c7"></div>
<div class="a" style="left:46px;top:492px;width:1326px;height:1px;background:#000"></div>
<div class="t" style="left:13.32px;top:496.69px;font-size:11px;line-height:11px;color:#444746;">104</div>
<div class="t" style="left:199.26px;top:496.50px;font-size:12.4px;line-height:12.4px;color:#000;">12578</div>
<div class="t" style="left:257.00px;top:496.50px;font-size:12.4px;line-height:12.4px;color:#000;">ANUDATTA PANDA</div>
<div class="t" style="left:489.19px;top:496.50px;font-size:12.4px;line-height:12.4px;color:#000;">FEMALE</div>
<div class="t" style="left:547.91px;top:496.50px;font-size:12.4px;line-height:12.4px;color:#000;">XII_Science</div>
<div class="t" style="left:634.34px;top:496.50px;font-size:12.4px;line-height:12.4px;color:#000;">AAKASH MED</div>
<div class="t" style="left:757.02px;top:496.50px;font-size:12.4px;line-height:12.4px;color:#000;">C</div>
<div class="t" style="left:804.89px;top:496.50px;font-size:12.4px;line-height:12.4px;color:#000;">RS</div>
<div class="t" style="left:842.99px;top:496.50px;font-size:12.4px;line-height:12.4px;color:#000;">MAITRI</div>
<div class="t" style="left:911.59px;top:496.50px;font-size:12.4px;line-height:12.4px;color:#000;">PCBM</div>
<div class="a" style="left:0px;top:512px;width:45px;height:1px;background:#c7c7c7"></div>
<div class="a" style="left:46px;top:512px;width:1326px;height:1px;background:#000"></div>
<div class="t" style="left:13.32px;top:516.69px;font-size:11px;line-height:11px;color:#444746;">105</div>
<div class="t" style="left:199.26px;top:516.50px;font-size:12.4px;line-height:12.4px;color:#000;">12600</div>
<div class="t" style="left:257.00px;top:516.50px;font-size:12.4px;line-height:12.4px;color:#000;">SUMESH BEHERA</div>
<div class="t" style="left:497.12px;top:516.50px;font-size:12.4px;line-height:12.4px;color:#000;">MALE</div>
<div class="t" style="left:547.91px;top:516.50px;font-size:12.4px;line-height:12.4px;color:#000;">XII_Science</div>
<div class="t" style="left:634.34px;top:516.50px;font-size:12.4px;line-height:12.4px;color:#000;">AAKASH MED</div>
<div class="t" style="left:757.02px;top:516.50px;font-size:12.4px;line-height:12.4px;color:#000;">C</div>
<div class="t" style="left:804.89px;top:516.50px;font-size:12.4px;line-height:12.4px;color:#000;">RS</div>
<div class="t" style="left:911.59px;top:516.50px;font-size:12.4px;line-height:12.4px;color:#000;">PCBM</div>
<div class="a" style="left:0px;top:532px;width:45px;height:1px;background:#c7c7c7"></div>
<div class="a" style="left:46px;top:532px;width:1326px;height:1px;background:#000"></div>
<div class="t" style="left:13.32px;top:536.69px;font-size:11px;line-height:11px;color:#444746;">106</div>
<div class="t" style="left:199.26px;top:536.50px;font-size:12.4px;line-height:12.4px;color:#000;">12636</div>
<div class="t" style="left:257.00px;top:536.50px;font-size:12.4px;line-height:12.4px;color:#000;">SALIL RAGHAV</div>
<div class="t" style="left:497.12px;top:536.50px;font-size:12.4px;line-height:12.4px;color:#000;">MALE</div>
<div class="t" style="left:547.91px;top:536.50px;font-size:12.4px;line-height:12.4px;color:#000;">XII_Science</div>
<div class="t" style="left:634.34px;top:536.50px;font-size:12.4px;line-height:12.4px;color:#000;">AAKASH MED</div>
<div class="t" style="left:757.02px;top:536.50px;font-size:12.4px;line-height:12.4px;color:#000;">C</div>
<div class="t" style="left:804.89px;top:536.50px;font-size:12.4px;line-height:12.4px;color:#000;">RS</div>
<div class="t" style="left:841.61px;top:536.50px;font-size:12.4px;line-height:12.4px;color:#000;">PREETI</div>
<div class="t" style="left:912.27px;top:536.50px;font-size:12.4px;line-height:12.4px;color:#000;">PCBH</div>
<div class="a" style="left:0px;top:552px;width:45px;height:1px;background:#c7c7c7"></div>
<div class="a" style="left:46px;top:552px;width:1326px;height:1px;background:#000"></div>
<div class="t" style="left:13.32px;top:556.69px;font-size:11px;line-height:11px;color:#444746;">107</div>
<div class="t" style="left:199.26px;top:556.50px;font-size:12.4px;line-height:12.4px;color:#000;">12638</div>
<div class="t" style="left:257.00px;top:556.50px;font-size:12.4px;line-height:12.4px;color:#000;">DEV SHAKTI PRASAD KAR</div>
<div class="t" style="left:497.12px;top:556.50px;font-size:12.4px;line-height:12.4px;color:#000;">MALE</div>
<div class="t" style="left:547.91px;top:556.50px;font-size:12.4px;line-height:12.4px;color:#000;">XII_Science</div>
<div class="t" style="left:634.34px;top:556.50px;font-size:12.4px;line-height:12.4px;color:#000;">AAKASH MED</div>
<div class="t" style="left:757.02px;top:556.50px;font-size:12.4px;line-height:12.4px;color:#000;">C</div>
<div class="t" style="left:804.89px;top:556.50px;font-size:12.4px;line-height:12.4px;color:#000;">DB</div>
<div class="t" style="left:840.23px;top:556.50px;font-size:12.4px;line-height:12.4px;color:#000;">AHIMSA</div>
<div class="t" style="left:911.59px;top:556.50px;font-size:12.4px;line-height:12.4px;color:#000;">PCBM</div>
<div class="a" style="left:0px;top:572px;width:45px;height:1px;background:#c7c7c7"></div>
<div class="a" style="left:46px;top:572px;width:1326px;height:1px;background:#000"></div>
<div class="t" style="left:13.32px;top:576.69px;font-size:11px;line-height:11px;color:#444746;">108</div>
<div class="t" style="left:199.26px;top:576.50px;font-size:12.4px;line-height:12.4px;color:#000;">12641</div>
<div class="t" style="left:257.00px;top:576.50px;font-size:12.4px;line-height:12.4px;color:#000;">AKSHURNA DAS</div>
<div class="t" style="left:489.19px;top:576.50px;font-size:12.4px;line-height:12.4px;color:#000;">FEMALE</div>
<div class="t" style="left:547.91px;top:576.50px;font-size:12.4px;line-height:12.4px;color:#000;">XII_Science</div>
<div class="t" style="left:634.34px;top:576.50px;font-size:12.4px;line-height:12.4px;color:#000;">AAKASH MED</div>
<div class="t" style="left:757.02px;top:576.50px;font-size:12.4px;line-height:12.4px;color:#000;">C</div>
<div class="t" style="left:804.89px;top:576.50px;font-size:12.4px;line-height:12.4px;color:#000;">RS</div>
<div class="t" style="left:840.23px;top:576.50px;font-size:12.4px;line-height:12.4px;color:#000;">AHIMSA</div>
<div class="t" style="left:912.27px;top:576.50px;font-size:12.4px;line-height:12.4px;color:#000;">PCBH</div>
<div class="a" style="left:0px;top:592px;width:45px;height:1px;background:#c7c7c7"></div>
<div class="a" style="left:46px;top:592px;width:1326px;height:1px;background:#000"></div>
<div class="t" style="left:13.32px;top:596.69px;font-size:11px;line-height:11px;color:#444746;">109</div>
<div class="t" style="left:199.26px;top:596.50px;font-size:12.4px;line-height:12.4px;color:#000;">12642</div>
<div class="t" style="left:257.00px;top:596.50px;font-size:12.4px;line-height:12.4px;color:#000;">SNEHA MITRA</div>
<div class="t" style="left:489.19px;top:596.50px;font-size:12.4px;line-height:12.4px;color:#000;">FEMALE</div>
<div class="t" style="left:547.91px;top:596.50px;font-size:12.4px;line-height:12.4px;color:#000;">XII_Science</div>
<div class="t" style="left:634.34px;top:596.50px;font-size:12.4px;line-height:12.4px;color:#000;">AAKASH MED</div>
<div class="t" style="left:757.02px;top:596.50px;font-size:12.4px;line-height:12.4px;color:#000;">C</div>
<div class="t" style="left:804.89px;top:596.50px;font-size:12.4px;line-height:12.4px;color:#000;">RS</div>
<div class="t" style="left:841.61px;top:596.50px;font-size:12.4px;line-height:12.4px;color:#000;">PREETI</div>
<div class="t" style="left:911.59px;top:596.50px;font-size:12.4px;line-height:12.4px;color:#000;">PCBM</div>
<div class="a" style="left:0px;top:612px;width:45px;height:1px;background:#c7c7c7"></div>
<div class="a" style="left:46px;top:612px;width:1326px;height:1px;background:#000"></div>
<div class="t" style="left:13.73px;top:616.69px;font-size:11px;line-height:11px;color:#444746;">110</div>
<div class="t" style="left:199.26px;top:616.50px;font-size:12.4px;line-height:12.4px;color:#000;">12647</div>
<div class="t" style="left:257.00px;top:616.50px;font-size:12.4px;line-height:12.4px;color:#000;">GAYATRI DHAL</div>
<div class="t" style="left:489.19px;top:616.50px;font-size:12.4px;line-height:12.4px;color:#000;">FEMALE</div>
<div class="t" style="left:547.91px;top:616.50px;font-size:12.4px;line-height:12.4px;color:#000;">XII_Science</div>
<div class="t" style="left:634.34px;top:616.50px;font-size:12.4px;line-height:12.4px;color:#000;">AAKASH MED</div>
<div class="t" style="left:757.02px;top:616.50px;font-size:12.4px;line-height:12.4px;color:#000;">C</div>
<div class="t" style="left:804.89px;top:616.50px;font-size:12.4px;line-height:12.4px;color:#000;">DB</div>
<div class="t" style="left:841.26px;top:616.50px;font-size:12.4px;line-height:12.4px;color:#000;">SHANTI</div>
<div class="t" style="left:911.59px;top:616.50px;font-size:12.4px;line-height:12.4px;color:#000;">PCBM</div>
<div class="a" style="left:0px;top:632px;width:45px;height:1px;background:#c7c7c7"></div>
<div class="a" style="left:46px;top:632px;width:1326px;height:1px;background:#000"></div>
<div class="t" style="left:14.14px;top:636.69px;font-size:11px;line-height:11px;color:#444746;">111</div>
<div class="t" style="left:199.26px;top:636.50px;font-size:12.4px;line-height:12.4px;color:#000;">12648</div>
<div class="t" style="left:257.00px;top:636.50px;font-size:12.4px;line-height:12.4px;color:#000;">SASWATI NAYAK</div>
<div class="t" style="left:489.19px;top:636.50px;font-size:12.4px;line-height:12.4px;color:#000;">FEMALE</div>
<div class="t" style="left:547.91px;top:636.50px;font-size:12.4px;line-height:12.4px;color:#000;">XII_Science</div>
<div class="t" style="left:634.34px;top:636.50px;font-size:12.4px;line-height:12.4px;color:#000;">AAKASH MED</div>
<div class="t" style="left:757.02px;top:636.50px;font-size:12.4px;line-height:12.4px;color:#000;">C</div>
<div class="t" style="left:804.89px;top:636.50px;font-size:12.4px;line-height:12.4px;color:#000;">DB</div>
<div class="t" style="left:841.61px;top:636.50px;font-size:12.4px;line-height:12.4px;color:#000;">PREETI</div>
<div class="t" style="left:911.59px;top:636.50px;font-size:12.4px;line-height:12.4px;color:#000;">PCBM</div>
<div class="a" style="left:0px;top:652px;width:45px;height:1px;background:#c7c7c7"></div>
<div class="a" style="left:46px;top:652px;width:1326px;height:1px;background:#000"></div>
<div class="t" style="left:13.73px;top:656.69px;font-size:11px;line-height:11px;color:#444746;">112</div>
<div class="t" style="left:199.26px;top:656.50px;font-size:12.4px;line-height:12.4px;color:#000;">12649</div>
<div class="t" style="left:257.00px;top:656.50px;font-size:12.4px;line-height:12.4px;color:#000;">NAMRATA NAMASWINI SAHOO</div>
<div class="t" style="left:489.19px;top:656.50px;font-size:12.4px;line-height:12.4px;color:#000;">FEMALE</div>
<div class="t" style="left:547.91px;top:656.50px;font-size:12.4px;line-height:12.4px;color:#000;">XII_Science</div>
<div class="t" style="left:634.34px;top:656.50px;font-size:12.4px;line-height:12.4px;color:#000;">AAKASH MED</div>
<div class="t" style="left:757.02px;top:656.50px;font-size:12.4px;line-height:12.4px;color:#000;">C</div>
<div class="t" style="left:804.89px;top:656.50px;font-size:12.4px;line-height:12.4px;color:#000;">DB</div>
<div class="t" style="left:841.61px;top:656.50px;font-size:12.4px;line-height:12.4px;color:#000;">PREETI</div>
<div class="t" style="left:911.59px;top:656.50px;font-size:12.4px;line-height:12.4px;color:#000;">PCBM</div>
<div class="a" style="left:0px;top:672px;width:45px;height:1px;background:#c7c7c7"></div>
<div class="a" style="left:46px;top:672px;width:1326px;height:1px;background:#000"></div>
<div class="t" style="left:13.73px;top:676.69px;font-size:11px;line-height:11px;color:#444746;">113</div>
<div class="t" style="left:199.26px;top:676.50px;font-size:12.4px;line-height:12.4px;color:#000;">12659</div>
<div class="t" style="left:257.00px;top:676.50px;font-size:12.4px;line-height:12.4px;color:#000;">OMM ABHIGYAN BEHERA</div>
<div class="t" style="left:497.12px;top:676.50px;font-size:12.4px;line-height:12.4px;color:#000;">MALE</div>
<div class="t" style="left:547.91px;top:676.50px;font-size:12.4px;line-height:12.4px;color:#000;">XII_Science</div>
<div class="t" style="left:634.34px;top:676.50px;font-size:12.4px;line-height:12.4px;color:#000;">AAKASH MED</div>
<div class="t" style="left:757.02px;top:676.50px;font-size:12.4px;line-height:12.4px;color:#000;">C</div>
<div class="t" style="left:804.89px;top:676.50px;font-size:12.4px;line-height:12.4px;color:#000;">RS</div>
<div class="t" style="left:841.26px;top:676.50px;font-size:12.4px;line-height:12.4px;color:#000;">SHANTI</div>
<div class="t" style="left:912.27px;top:676.50px;font-size:12.4px;line-height:12.4px;color:#000;">PCBH</div>
<div class="a" style="left:0px;top:692px;width:45px;height:1px;background:#c7c7c7"></div>
<div class="a" style="left:46px;top:692px;width:1326px;height:1px;background:#000"></div>
<div class="t" style="left:13.73px;top:696.69px;font-size:11px;line-height:11px;color:#444746;">114</div>
<div class="t" style="left:199.26px;top:696.50px;font-size:12.4px;line-height:12.4px;color:#000;">12664</div>
<div class="t" style="left:257.00px;top:696.50px;font-size:12.4px;line-height:12.4px;color:#000;">BHAVIKA EPARI</div>
<div class="t" style="left:489.19px;top:696.50px;font-size:12.4px;line-height:12.4px;color:#000;">FEMALE</div>
<div class="t" style="left:547.91px;top:696.50px;font-size:12.4px;line-height:12.4px;color:#000;">XII_Science</div>
<div class="t" style="left:634.34px;top:696.50px;font-size:12.4px;line-height:12.4px;color:#000;">AAKASH MED</div>
<div class="t" style="left:757.02px;top:696.50px;font-size:12.4px;line-height:12.4px;color:#000;">C</div>
<div class="t" style="left:804.89px;top:696.50px;font-size:12.4px;line-height:12.4px;color:#000;">RS</div>
<div class="t" style="left:841.26px;top:696.50px;font-size:12.4px;line-height:12.4px;color:#000;">SHANTI</div>
<div class="t" style="left:912.27px;top:696.50px;font-size:12.4px;line-height:12.4px;color:#000;">PCBH</div>
<div class="a" style="left:0px;top:712px;width:45px;height:1px;background:#c7c7c7"></div>
<div class="a" style="left:46px;top:712px;width:1326px;height:1px;background:#000"></div>
<div class="t" style="left:13.73px;top:716.69px;font-size:11px;line-height:11px;color:#444746;">115</div>
<div class="t" style="left:199.26px;top:716.50px;font-size:12.4px;line-height:12.4px;color:#000;">12668</div>
<div class="t" style="left:257.00px;top:716.50px;font-size:12.4px;line-height:12.4px;color:#000;">SASWAT SOUMYA DASH</div>
<div class="t" style="left:497.12px;top:716.50px;font-size:12.4px;line-height:12.4px;color:#000;">MALE</div>
<div class="t" style="left:547.91px;top:716.50px;font-size:12.4px;line-height:12.4px;color:#000;">XII_Science</div>
<div class="t" style="left:634.34px;top:716.50px;font-size:12.4px;line-height:12.4px;color:#000;">AAKASH MED</div>
<div class="t" style="left:757.02px;top:716.50px;font-size:12.4px;line-height:12.4px;color:#000;">C</div>
<div class="t" style="left:804.89px;top:716.50px;font-size:12.4px;line-height:12.4px;color:#000;">RS</div>
<div class="t" style="left:842.99px;top:716.50px;font-size:12.4px;line-height:12.4px;color:#000;">MAITRI</div>
<div class="t" style="left:911.59px;top:716.50px;font-size:12.4px;line-height:12.4px;color:#000;">PCBM</div>
<div class="a" style="left:0px;top:732px;width:45px;height:1px;background:#c7c7c7"></div>
<div class="a" style="left:46px;top:732px;width:1326px;height:1px;background:#000"></div>
<div class="t" style="left:13.73px;top:736.69px;font-size:11px;line-height:11px;color:#444746;">116</div>
<div class="t" style="left:199.26px;top:736.50px;font-size:12.4px;line-height:12.4px;color:#000;">12669</div>
<div class="t" style="left:257.00px;top:736.50px;font-size:12.4px;line-height:12.4px;color:#000;">ARUP KUMAR SAHOO</div>
<div class="t" style="left:497.12px;top:736.50px;font-size:12.4px;line-height:12.4px;color:#000;">MALE</div>
<div class="t" style="left:547.91px;top:736.50px;font-size:12.4px;line-height:12.4px;color:#000;">XII_Science</div>
<div class="t" style="left:634.34px;top:736.50px;font-size:12.4px;line-height:12.4px;color:#000;">AAKASH MED</div>
<div class="t" style="left:757.02px;top:736.50px;font-size:12.4px;line-height:12.4px;color:#000;">C</div>
<div class="t" style="left:804.89px;top:736.50px;font-size:12.4px;line-height:12.4px;color:#000;">RS</div>
<div class="t" style="left:911.59px;top:736.50px;font-size:12.4px;line-height:12.4px;color:#000;">PCBM</div>
<div class="a" style="left:0px;top:752px;width:45px;height:1px;background:#c7c7c7"></div>
<div class="a" style="left:46px;top:752px;width:1326px;height:1px;background:#000"></div>
<div class="t" style="left:13.73px;top:756.69px;font-size:11px;line-height:11px;color:#444746;">117</div>
<div class="t" style="left:199.26px;top:756.50px;font-size:12.4px;line-height:12.4px;color:#000;">12670</div>
<div class="t" style="left:257.00px;top:756.50px;font-size:12.4px;line-height:12.4px;color:#000;">DIPTI MAYEE PALEI</div>
<div class="t" style="left:489.19px;top:756.50px;font-size:12.4px;line-height:12.4px;color:#000;">FEMALE</div>
<div class="t" style="left:547.91px;top:756.50px;font-size:12.4px;line-height:12.4px;color:#000;">XII_Science</div>
<div class="t" style="left:634.34px;top:756.50px;font-size:12.4px;line-height:12.4px;color:#000;">AAKASH MED</div>
<div class="t" style="left:757.02px;top:756.50px;font-size:12.4px;line-height:12.4px;color:#000;">C</div>
<div class="t" style="left:804.89px;top:756.50px;font-size:12.4px;line-height:12.4px;color:#000;">RS</div>
<div class="t" style="left:912.27px;top:756.50px;font-size:12.4px;line-height:12.4px;color:#000;">PCBH</div>
<div class="a" style="left:0px;top:772px;width:45px;height:1px;background:#c7c7c7"></div>
<div class="a" style="left:46px;top:772px;width:1326px;height:1px;background:#000"></div>
<div class="t" style="left:13.73px;top:776.69px;font-size:11px;line-height:11px;color:#444746;">118</div>
<div class="t" style="left:199.26px;top:776.50px;font-size:12.4px;line-height:12.4px;color:#000;">12679</div>
<div class="t" style="left:257.00px;top:776.50px;font-size:12.4px;line-height:12.4px;color:#000;">AYUSH PRIYADARSHAN</div>
<div class="t" style="left:497.12px;top:776.50px;font-size:12.4px;line-height:12.4px;color:#000;">MALE</div>
<div class="t" style="left:547.91px;top:776.50px;font-size:12.4px;line-height:12.4px;color:#000;">XII_Science</div>
<div class="t" style="left:634.34px;top:776.50px;font-size:12.4px;line-height:12.4px;color:#000;">AAKASH MED</div>
<div class="t" style="left:757.02px;top:776.50px;font-size:12.4px;line-height:12.4px;color:#000;">C</div>
<div class="t" style="left:804.89px;top:776.50px;font-size:12.4px;line-height:12.4px;color:#000;">RS</div>
<div class="t" style="left:912.27px;top:776.50px;font-size:12.4px;line-height:12.4px;color:#000;">PCBH</div>
<div class="a" style="left:0px;top:792px;width:45px;height:1px;background:#c7c7c7"></div>
<div class="a" style="left:46px;top:792px;width:1326px;height:1px;background:#000"></div>
<div class="t" style="left:13.73px;top:796.69px;font-size:11px;line-height:11px;color:#444746;">119</div>
<div class="t" style="left:199.26px;top:796.50px;font-size:12.4px;line-height:12.4px;color:#000;">12697</div>
<div class="t" style="left:257.00px;top:796.50px;font-size:12.4px;line-height:12.4px;color:#000;">DEREK SAMUEL DANI</div>
<div class="t" style="left:497.12px;top:796.50px;font-size:12.4px;line-height:12.4px;color:#000;">MALE</div>
<div class="t" style="left:547.91px;top:796.50px;font-size:12.4px;line-height:12.4px;color:#000;">XII_Science</div>
<div class="t" style="left:634.34px;top:796.50px;font-size:12.4px;line-height:12.4px;color:#000;">AAKASH MED</div>
<div class="t" style="left:757.02px;top:796.50px;font-size:12.4px;line-height:12.4px;color:#000;">C</div>
<div class="t" style="left:804.89px;top:796.50px;font-size:12.4px;line-height:12.4px;color:#000;">RS</div>
<div class="t" style="left:911.59px;top:796.50px;font-size:12.4px;line-height:12.4px;color:#000;">PCBM</div>
<div class="a" style="left:179px;top:293px;width:1px;height:517px;background:#000"></div>
<div class="a" style="left:253px;top:293px;width:1px;height:517px;background:#000"></div>
<div class="a" style="left:484px;top:293px;width:1px;height:517px;background:#000"></div>
<div class="a" style="left:543px;top:293px;width:1px;height:517px;background:#000"></div>
<div class="a" style="left:618px;top:293px;width:1px;height:517px;background:#000"></div>
<div class="a" style="left:731px;top:293px;width:1px;height:517px;background:#000"></div>
<div class="a" style="left:791px;top:293px;width:1px;height:517px;background:#000"></div>
<div class="a" style="left:835px;top:293px;width:1px;height:517px;background:#000"></div>
<div class="a" style="left:892px;top:293px;width:1px;height:517px;background:#000"></div>
<div class="a" style="left:966px;top:293px;width:1px;height:517px;background:#000"></div>
<div class="a" style="left:1048px;top:293px;width:1px;height:517px;background:#000"></div>
<div class="a" style="left:1162px;top:293px;width:1px;height:517px;background:#000"></div>
<div class="a" style="left:1276px;top:293px;width:1px;height:517px;background:#000"></div>
<div class="a" style="left:0px;top:810px;width:1384px;height:1px;background:#e1e1e1"></div>
<div class="a" style="left:1373px;top:293px;width:11px;height:517px;background:#fff"></div>
<div class="a" style="left:1374px;top:337px;width:9px;height:26px;background:#dadce0;border-radius:5px"></div>
<div class="a" style="left:0px;top:811px;width:46px;height:12px;background:#f8f9fa"></div>
<div class="a" style="left:127px;top:812px;width:673px;height:9px;background:#dadce0;border-radius:5px"></div>
<div class="a" style="left:0px;top:823px;width:1384px;height:1px;background:#dadce0"></div>
<div class="a" style="left:0px;top:824px;width:1384px;height:36px;background:#f9fbfd"></div>
<svg class="a" style="left:56px;top:837px;" width="12" height="12" viewBox="0 0 12 12"><path d="M6 0.5V11.5M0.5 6H11.5" stroke="#444746" stroke-width="1.9"/></svg>
<svg class="a" style="left:95px;top:838px;" width="14" height="10" viewBox="0 0 14 10"><path d="M0 1H14M0 5H14M0 9H14" stroke="#444746" stroke-width="1.7"/></svg>
<div class="a" style="left:125px;top:832px;width:1px;height:20px;background:#b0b3b5"></div>
<div class="a" style="left:126px;top:834px;width:16px;height:18px;overflow:hidden"><div class="t" style="left:-9.5px;top:2.3px;font-size:13.5px;line-height:13.5px;color:#444746;transform:scaleX(1.06);transform-origin:0 0">nce</div></div>
<svg class="a" style="left:152px;top:841px;" width="8" height="4" viewBox="0 0 8 4"><path d="M0 0H8L4 4Z" fill="#444746"/></svg>
<div class="t" style="left:185.00px;top:835.98px;font-size:14.2px;line-height:14.2px;color:#444746;transform:scaleX(1.0721);transform-origin:0 0;-webkit-text-stroke:0.3px #444746">XI_Humanities</div>
<svg class="a" style="left:295px;top:841px;" width="8" height="4" viewBox="0 0 8 4"><path d="M0 0H8L4 4Z" fill="#444746"/></svg>
<div class="a" style="left:315px;top:824px;width:127px;height:36px;background:#e1e9f7"></div>
<div class="t" style="left:327.70px;top:835.98px;font-size:14.2px;line-height:14.2px;color:#0b57d0;transform:scaleX(1.0887);transform-origin:0 0;-webkit-text-stroke:0.3px #0b57d0">XII_Science</div>
<svg class="a" style="left:421.6px;top:841px;" width="8" height="4" viewBox="0 0 8 4"><path d="M0 0H8L4 4Z" fill="#0b57d0"/></svg>
<div class="t" style="left:454.00px;top:835.98px;font-size:14.2px;line-height:14.2px;color:#444746;transform:scaleX(1.0402);transform-origin:0 0;-webkit-text-stroke:0.3px #444746">XII_Commerce</div>
<svg class="a" style="left:564px;top:841px;" width="8" height="4" viewBox="0 0 8 4"><path d="M0 0H8L4 4Z" fill="#444746"/></svg>
<div class="t" style="left:597.30px;top:835.98px;font-size:14.2px;line-height:14.2px;color:#444746;transform:scaleX(1.0697);transform-origin:0 0;-webkit-text-stroke:0.3px #444746">XII_Humanities</div>
<svg class="a" style="left:712px;top:841px;" width="8" height="4" viewBox="0 0 8 4"><path d="M0 0H8L4 4Z" fill="#444746"/></svg>
<svg class="a" style="left:745px;top:835px;" width="17" height="17" viewBox="0 0 17 17"><path d="M1 1H16V13H11L8.5 15.5V13H1Z" fill="#444746"/></svg>
<div class="t" style="left:750.86px;top:837.96px;font-size:9.5px;line-height:9.5px;color:#fff;font-weight:bold;">5</div>
<svg class="a" style="left:767px;top:834px;" width="14" height="18" viewBox="0 0 14 18"><path d="M3.5 7V5A3.5 3.5 0 0 1 10.5 5V7" fill="none" stroke="#444746" stroke-width="1.9"/><rect x="1" y="7" width="12" height="10" rx="1.3" fill="#444746"/><circle cx="7" cy="12" r="1.3" fill="#f9fbfd"/></svg>
<div class="t" style="left:789.40px;top:835.98px;font-size:14.2px;line-height:14.2px;color:#444746;transform:scaleX(0.9891);transform-origin:0 0;-webkit-text-stroke:0.3px #444746">SECTION &amp; HOUSE SUMMARY</div>
<svg class="a" style="left:1007px;top:841px;" width="8" height="4" viewBox="0 0 8 4"><path d="M0 0H8L4 4Z" fill="#444746"/></svg>
<svg class="a" style="left:1039px;top:834px;" width="14" height="18" viewBox="0 0 14 18"><path d="M3.5 7V5A3.5 3.5 0 0 1 10.5 5V7" fill="none" stroke="#444746" stroke-width="1.9"/><rect x="1" y="7" width="12" height="10" rx="1.3" fill="#444746"/><circle cx="7" cy="12" r="1.3" fill="#f9fbfd"/></svg>
<div class="a" style="left:1061px;top:832px;width:42px;height:20px;overflow:hidden"><div class="t" style="left:0;top:4.3px;font-size:13.6px;line-height:13.6px;color:#444746;-webkit-text-stroke:0.3px #444746;transform:scaleX(1.0);transform-origin:0 0">LANG, L</div></div>
<div class="a" style="left:1103px;top:832px;width:1px;height:20px;background:#b0b3b5"></div>
<svg class="a" style="left:1122px;top:837px;" width="8" height="12" viewBox="0 0 8 12"><path d="M6.5 1L1.5 6L6.5 11" fill="none" stroke="#444746" stroke-width="1.7"/></svg>
<svg class="a" style="left:1162px;top:837px;" width="8" height="12" viewBox="0 0 8 12"><path d="M1.5 1L6.5 6L1.5 11" fill="none" stroke="#444746" stroke-width="1.7"/></svg>
<div class="a" style="left:1279px;top:824px;width:1px;height:36px;background:#dadce0"></div>
<svg class="a" style="left:1291px;top:832px;" width="20" height="22" viewBox="0 0 20 22"><path d="M2 0H18A2 2 0 0 1 20 2V17A2 2 0 0 1 18 19H12.5L10 21.5L7.5 19H2A2 2 0 0 1 0 17V2A2 2 0 0 1 2 0Z" fill="#188038"/><path d="M10 3.5C10.5 7.5 11.5 8.8 15.5 9.5C11.5 10.2 10.5 11.5 10 15.5C9.5 11.5 8.5 10.2 4.5 9.5C8.5 8.8 9.5 7.5 10 3.5Z" fill="#fff"/></svg>
<div class="t" style="left:1324.00px;top:836.24px;font-size:13.3px;line-height:13.3px;color:#188038;transform:scaleX(0.8648);transform-origin:0 0;">Explore</div>
<div class="a" style="left:1384px;top:103px;width:56px;height:757px;background:#f9fbfd"></div>
<svg class="a" style="left:1401px;top:180px;" width="20" height="20" viewBox="0 0 20 20"><path d="M0 2A2 2 0 0 1 2 0H18A2 2 0 0 1 20 2V15L15 20H2A2 2 0 0 1 0 18Z" fill="#fff"/><path d="M0 15V18A2 2 0 0 0 2 20H5V15Z" fill="#1e8e3e"/><path d="M5 15V20H15V15Z" fill="#34a853"/><path d="M15 15V20L20 15Z" fill="#ea4335"/><path d="M15 0V5H20V2A2 2 0 0 0 18 0Z" fill="#fbbc04"/><path d="M15 5V15H20V5Z" fill="#fbbc04"/><path d="M0 2A2 2 0 0 1 2 0H15V5H5V15H0Z" fill="#4285f4"/><rect x="5" y="5" width="10" height="10" fill="#fff"/></svg>
<div class="t" style="left:1406.55px;top:187.23px;font-size:8px;line-height:8px;color:#4285f4;font-weight:bold;">31</div>
<svg class="a" style="left:1402px;top:236px;" width="20" height="20" viewBox="0 0 20 20"><rect width="20" height="20" rx="2" fill="#fbbc04"/><circle cx="10" cy="9" r="4.3" fill="#fff"/><rect x="8" y="14" width="4" height="1.6" fill="#fff"/></svg>
<svg class="a" style="left:1402px;top:292px;" width="19" height="19" viewBox="0 0 19 19"><circle cx="8.7" cy="10.3" r="6.8" fill="none" stroke="#1a73e8" stroke-width="2.6"/><path d="M5.4 10.2L8 12.6L15.5 4.5" fill="none" stroke="#1a73e8" stroke-width="2.5"/><path d="M13.5 3L16 0.5L18.5 3L16 5.5Z" fill="#1a73e8"/></svg>
<svg class="a" style="left:1404px;top:349px;" width="16" height="17" viewBox="0 0 16 17"><circle cx="8" cy="4" r="3.2" fill="#0b57d0"/><path d="M0.5 16.5V13A4.5 4.5 0 0 1 5 8.5H11A4.5 4.5 0 0 1 15.5 13V16.5Z" fill="#0b57d0"/><path d="M0.5 16.5V13A4.5 4.5 0 0 1 3 9.2V16.5Z" fill="#6a9cf2"/><path d="M15.5 16.5V13A4.5 4.5 0 0 0 13 9.2V16.5Z" fill="#6a9cf2"/></svg>
<svg class="a" style="left:1404px;top:404px;" width="16" height="20" viewBox="0 0 16 20"><path d="M8 0.5A6.8 6.8 0 0 0 1.2 7.3C1.2 12 8 19.5 8 19.5S14.8 12 14.8 7.3A6.8 6.8 0 0 0 8 0.5Z" fill="#34a853"/><path d="M8 0.5A6.8 6.8 0 0 0 2.8 3L8 7.3Z" fill="#1a73e8"/><path d="M2.8 3A6.8 6.8 0 0 0 1.2 7.3C1.2 8.5 1.7 9.9 2.4 11.3L8 7.3Z" fill="#ea4335"/><path d="M8 0.5A6.8 6.8 0 0 1 14.8 7.3L8 7.3Z" fill="#4285f4"/><path d="M14.8 7.3C14.8 12 8 19.5 8 19.5L5 15.5L14.2 4.5A6.8 6.8 0 0 1 14.8 7.3Z" fill="#fbbc04"/><circle cx="8" cy="7.3" r="2.4" fill="#fff"/></svg>
<div class="a" style="left:1401px;top:458px;width:21px;height:1px;background:#c7c7c7"></div>
<svg class="a" style="left:1404px;top:495px;" width="16" height="16" viewBox="0 0 16 16"><path d="M8 1V15M1 8H15" stroke="#1f1f1f" stroke-width="1.8"/></svg>
<svg class="a" style="left:1407px;top:826px;" width="10" height="12" viewBox="0 0 10 12"><path d="M2 1L7 6L2 11" fill="none" stroke="#444746" stroke-width="1.8"/></svg>
<div class="t" style="left:1143.00px;top:777.81px;font-size:18.3px;line-height:18.3px;color:rgba(120,120,120,0.45);transform:scaleX(1.0802);transform-origin:0 0;">Activate Windows</div>
<div class="t" style="left:1143.00px;top:802.60px;font-size:15px;line-height:15px;color:rgba(120,120,120,0.45);transform:scaleX(0.9946);transform-origin:0 0;">Go to Settings to activate Windows.</div>
<svg class="a" style="left:1374px;top:782px;" width="9" height="6" viewBox="0 0 9 6"><path d="M1 5H8L4.5 1Z" fill="#9aa0a6"/></svg>
<svg class="a" style="left:1374px;top:799px;" width="9" height="6" viewBox="0 0 9 6"><path d="M1 1H8L4.5 5Z" fill="#9aa0a6"/></svg>
<div class="a" style="left:1372px;top:778px;width:12px;height:1px;background:#e1e1e1"></div>
<div class="a" style="left:1372px;top:795px;width:12px;height:1px;background:#e1e1e1"></div>
<svg class="a" style="left:1345px;top:812px;" width="6" height="9" viewBox="0 0 6 9"><path d="M5 1V8L1 4.5Z" fill="#9aa0a6"/></svg>
<svg class="a" style="left:1363px;top:812px;" width="6" height="9" viewBox="0 0 6 9"><path d="M1 1V8L5 4.5Z" fill="#9aa0a6"/></svg>
<div class="a" style="left:1337px;top:811px;width:1px;height:12px;background:#e1e1e1"></div>
<div class="a" style="left:1355px;top:811px;width:1px;height:12px;background:#e1e1e1"></div>
<div class="a" style="left:0px;top:860px;width:1440px;height:40px;background:linear-gradient(90deg,#1e3540 0%,#1e3340 40%,#1b2744 100%)"></div>
<div class="a" style="left:48px;top:860px;width:288px;height:40px;background:#f0f0f0;border-top:1px solid #c8c8c8"></div>
<svg class="a" style="left:16px;top:872px;" width="16" height="16" viewBox="0 0 16 16"><path d="M0 2.2L6.6 1.3V7.6H0ZM7.4 1.2L16 0V7.6H7.4ZM0 8.4H6.6V14.7L0 13.8ZM7.4 8.4H16V16L7.4 14.8Z" fill="#fff"/></svg>
<svg class="a" style="left:59px;top:871px;" width="18" height="18" viewBox="0 0 18 18"><circle cx="11" cy="7" r="5.5" fill="none" stroke="#1a1a1a" stroke-width="1.4"/><path d="M7 11L1.2 16.8" stroke="#1a1a1a" stroke-width="1.5"/></svg>
<div class="t" style="left:88.75px;top:873.94px;font-size:14.6px;line-height:14.6px;color:#2b2b2b;transform:scaleX(0.9842);transform-origin:0 0;">Type here to search</div>
<svg class="a" style="left:258px;top:861px;" width="76" height="39" viewBox="0 0 76 39"><defs><linearGradient id="jg1" x1="0.2" y1="0" x2="0.8" y2="1"><stop offset="0" stop-color="#9ff0c8"/><stop offset="0.45" stop-color="#7fc6ee"/><stop offset="1" stop-color="#a08ce8"/></linearGradient><linearGradient id="jg2" x1="0" y1="0" x2="1" y2="0.6"><stop offset="0" stop-color="#3fd8e8"/><stop offset="1" stop-color="#a8f0a8"/></linearGradient></defs><circle cx="5.5" cy="18" r="3" fill="#dff6f0"/><circle cx="24" cy="15" r="14" fill="url(#jg1)"/><path d="M24 15L19 5M24 15L14 9M24 15L11 14M24 15L12 20M24 15L25 4M24 15L30 6M24 15L34 10" stroke="#4a6ee0" stroke-width="2.6"/><circle cx="24" cy="15" r="7" fill="#a7c8ec"/><path d="M26 20C28 24 32 28 40 30M24 22C25 27 27 31 30 35M22 23C21 28 22 32 21 36M20 22C16 28 8 32 4 33M28 18C34 22 38 25 44 26" fill="none" stroke="#6fb6e8" stroke-width="1.1"/><path d="M47 14A9.5 7 0 0 1 66 14V16H47Z" fill="url(#jg2)"/><path d="M49 17C48 24 46 30 46 36M53 17C53 25 52 30 51 36M57 17C57 24 58 30 57 35M61 17C63 23 66 28 70 30" fill="none" stroke="#4fd8e0" stroke-width="1"/><circle cx="62" cy="15" r="2.4" fill="#d8f4fa"/><circle cx="67" cy="20" r="1.6" fill="#d8f4fa"/><circle cx="61" cy="5" r="1.5" fill="#e0f6fa"/></svg>
<svg class="a" style="left:351px;top:871px;" width="18" height="17" viewBox="0 0 18 17"><rect x="1" y="4" width="11" height="9" fill="none" stroke="#fff" stroke-width="1.3"/><path d="M1 1.2H12M1 15.8H12M15 1V16M15 5.5H17.5V11.5H15" fill="none" stroke="#fff" stroke-width="1.3"/></svg>
<svg class="a" style="left:398px;top:868px;" width="25" height="25" viewBox="0 0 25 25"><defs><linearGradient id="eg1" x1="0" y1="1" x2="1" y2="0"><stop offset="0" stop-color="#0c59a4"/><stop offset="1" stop-color="#1b9de2"/></linearGradient><linearGradient id="eg2" x1="0" y1="0" x2="1" y2="1"><stop offset="0" stop-color="#35c1f1"/><stop offset="1" stop-color="#66eb6e"/></linearGradient></defs><path d="M12.5 0.5A12 12 0 0 0 0.5 12.5C0.5 19.5 6 24.5 12.5 24.5C16 24.5 19.5 23 21.6 20.5C18 22 12.5 21.5 10 18C7.5 14.5 9 10.5 12.5 10H22.5C24.5 10 24.5 8 24 7A12 12 0 0 0 12.5 0.5Z" fill="url(#eg1)"/><path d="M12.5 0.5A12 12 0 0 1 24.5 12C24.5 15.5 22 17.5 18.5 17.5C15.5 17.5 14 16 14 15.5C14 15 15 14.5 15 12.5C15 9 12 6 8 6C4 6 1.5 8.5 0.8 10A12 12 0 0 1 12.5 0.5Z" fill="url(#eg2)"/></svg>
<svg class="a" style="left:448px;top:870px;" width="23" height="19" viewBox="0 0 23 19"><path d="M0 1.5A1.5 1.5 0 0 1 1.5 0H8L10 2.5H21.5A1.5 1.5 0 0 1 23 4V17.5A1.5 1.5 0 0 1 21.5 19H1.5A1.5 1.5 0 0 1 0 17.5Z" fill="#f3b72e"/><path d="M0 5H23V17.5A1.5 1.5 0 0 1 21.5 19H1.5A1.5 1.5 0 0 1 0 17.5Z" fill="#ffd665"/><path d="M6 19V12H17V19H14V15H9V19Z" fill="#2f86d8"/></svg>
<svg class="a" style="left:496px;top:868px;" width="24" height="24" viewBox="0 0 24 24"><path d="M8 6V4A4 4 0 0 1 16 4V6" fill="none" stroke="#2aa5e8" stroke-width="2"/><path d="M1 6H23V21A2.5 2.5 0 0 1 20.5 23.5H3.5A2.5 2.5 0 0 1 1 21Z" fill="#fafafa"/><rect x="7" y="10.5" width="4.5" height="4.5" fill="#f25022"/><rect x="12.5" y="10.5" width="4.5" height="4.5" fill="#7fba00"/><rect x="7" y="16" width="4.5" height="4.5" fill="#00a4ef"/><rect x="12.5" y="16" width="4.5" height="4.5" fill="#ffb900"/></svg>
<svg class="a" style="left:545px;top:869px;" width="25" height="22" viewBox="0 0 25 22"><path d="M0 8L12.5 0L25 8V21H0Z" fill="#1070c8"/><rect x="0" y="8" width="25" height="13.5" fill="#27a0ef"/><path d="M0 8L12.5 15L25 8V6.5L12.5 13.5L0 6.5Z" fill="#fff"/><path d="M0 21.5L10 13L12.5 15L15 13L25 21.5Z" fill="#4cc1f7"/></svg>
<div class="a" style="left:583px;top:860px;width:48px;height:40px;background:#46575f"></div>
<div class="a" style="left:583px;top:898px;width:48px;height:2px;background:#76b9ed"></div>
<svg class="a" style="left:595px;top:868px;" width="24" height="24" viewBox="0 0 24 24"><circle cx="12" cy="12" r="11.8" fill="#db4437"/><path d="M12 12L1.8 6.1A11.8 11.8 0 0 0 6.1 22.2Z" fill="#0f9d58"/><path d="M12 12L6.1 22.2A11.8 11.8 0 0 0 23.3 8.6L12 8.6Z" fill="#ffcd40"/><path d="M12 12L1.8 6.1A11.8 11.8 0 0 1 23.3 8.6H12Z" fill="#db4437"/><path d="M12 12L6.1 22.2L12 12L17 12Z" fill="#0f9d58"/><circle cx="12" cy="12" r="5.4" fill="#fff"/><circle cx="12" cy="12" r="4.3" fill="#4285f4"/></svg>
<div class="a" style="left:1059px;top:870px;width:21px;height:20px;border-radius:50%;background:radial-gradient(circle at 40% 35%,#ffc12e,#f7901e 70%,#e8681a)"></div>
<div class="t" style="left:1090.00px;top:873.20px;font-size:14.3px;line-height:14.3px;color:#fff;transform:scaleX(0.9076);transform-origin:0 0;">34°C</div>
<div class="t" style="left:1128.30px;top:873.20px;font-size:14.3px;line-height:14.3px;color:#fff;transform:scaleX(0.9174);transform-origin:0 0;">Sunny</div>
<svg class="a" style="left:1190px;top:875px;" width="14" height="9" viewBox="0 0 14 9"><path d="M1 8L7 2L13 8" fill="none" stroke="#fff" stroke-width="1.3"/></svg>
<svg class="a" style="left:1214px;top:872px;" width="15" height="17" viewBox="0 0 15 17"><path d="M3 4A2 2 0 0 1 5 2H8A2 2 0 0 1 10 4V12A2 2 0 0 1 8 14H5A2 2 0 0 1 3 12Z" fill="none" stroke="#fff" stroke-width="1.1"/><path d="M10 6.5L13.5 4.5V11.5L10 9.5" fill="none" stroke="#fff" stroke-width="1.1"/><path d="M4 1A4 4 0 0 1 9 1M4 16A4 4 0 0 0 9 16" fill="none" stroke="#fff" stroke-width="1"/></svg>
<svg class="a" style="left:1236px;top:871px;" width="18" height="18" viewBox="0 0 18 18"><rect x="3.5" y="4.5" width="14" height="9" fill="none" stroke="#fff" stroke-width="1.1"/><path d="M7 17H14M10.5 13.5V17M0.5 1H4.5V8H0.5Z" fill="none" stroke="#fff" stroke-width="1.1"/></svg>
<svg class="a" style="left:1260px;top:872px;" width="17" height="16" viewBox="0 0 17 16"><path d="M1 5.5H4L8 2V14L4 10.5H1Z" fill="none" stroke="#fff" stroke-width="1.1"/><path d="M10.5 5.5A3 3 0 0 1 10.5 10.5M12.5 3.5A6 6 0 0 1 12.5 12.5M14.5 1.5A8.5 8.5 0 0 1 14.5 14.5" fill="none" stroke="#fff" stroke-width="1.1"/></svg>
<div class="t" style="left:1287.20px;top:874.13px;font-size:13.2px;line-height:13.2px;color:#fff;transform:scaleX(0.7761);transform-origin:0 0;">ENG</div>
<div class="t" style="left:1338.60px;top:863.83px;font-size:13.2px;line-height:13.2px;color:#fff;transform:scaleX(0.7992);transform-origin:0 0;">12:13</div>
<div class="t" style="left:1322.80px;top:881.33px;font-size:13.2px;line-height:13.2px;color:#fff;transform:scaleX(0.8619);transform-origin:0 0;">24-04-2023</div>
<svg class="a" style="left:1398px;top:871px;" width="26" height="24" viewBox="0 0 26 24"><path d="M1 1.5H20V14.5H8L4 18V14.5H1Z" fill="#fff"/><path d="M4.5 5H16.5M4.5 8H16.5M4.5 11H13" stroke="#1c2a44" stroke-width="1"/><circle cx="16.5" cy="16.5" r="7.2" fill="#2b2b2b" stroke="#bdbdbd" stroke-width="1"/></svg>
<div class="t" style="left:1411.02px;top:880.92px;font-size:12.5px;line-height:12.5px;color:#fff;font-weight:bold;">6</div>
<div class="a" style="left:1435px;top:860px;width:1px;height:40px;background:#5b6a80"></div>
</body></html>
